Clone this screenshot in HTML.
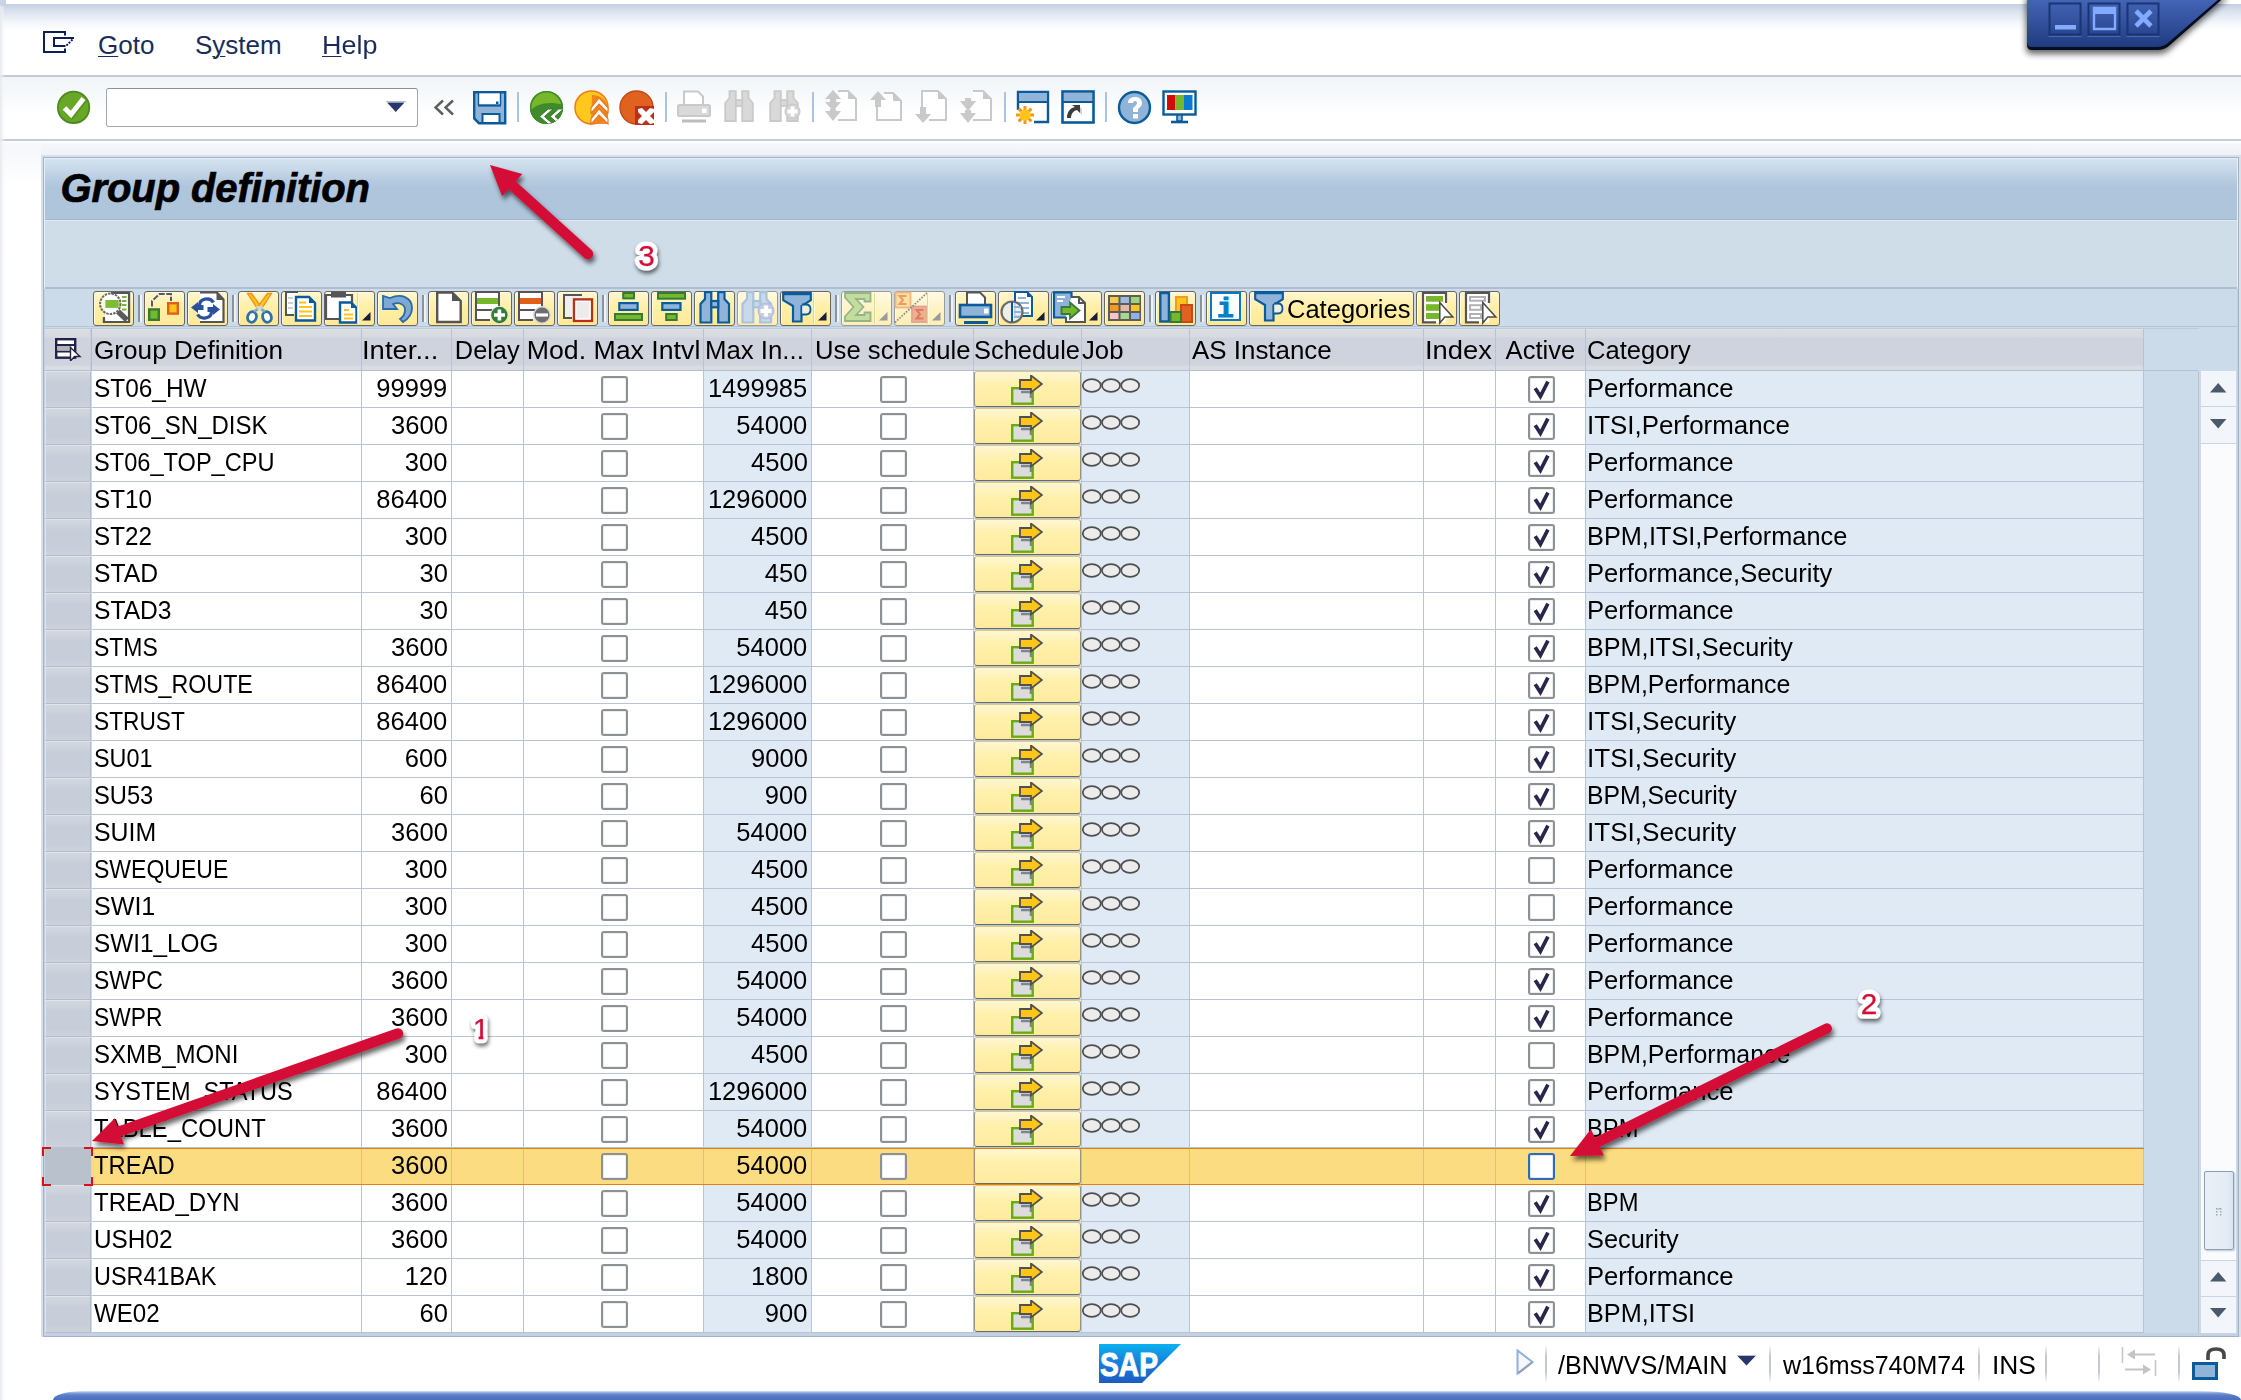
<!DOCTYPE html>
<html lang="en"><head><meta charset="utf-8"><title>Group definition</title>
<style>
html,body{margin:0;padding:0}
body{width:2241px;height:1400px;position:relative;overflow:hidden;background:#fff;font-family:"Liberation Sans", sans-serif;font-size:26px;color:#000}
.a{position:absolute}
.t{position:absolute;white-space:nowrap;line-height:37px;height:37px}
.r{text-align:right}
.sx{display:inline-block;transform-origin:0 50%}
.cell{position:absolute;height:36px}
.w{background:#fff}
.b{background:#dfeaf5}
.vl{position:absolute;width:1px;background:#b7c4d6}
.hl{position:absolute;height:1px;background:#b7c4d6}
.cb{position:absolute;width:23px;height:23px;border:2px solid #8e9193;border-radius:3px;background:#fff;box-shadow:inset 0 0 0 1px #ececec}
.selc{position:absolute;background:linear-gradient(#d2d7df,#c8ced9 30%,#c8ced9 80%,#cdd2dc);border:1px solid #dfe3ea;border-right-color:#b4bccb;border-bottom-color:#b4bccb;box-sizing:border-box}
.btn{position:absolute;box-sizing:border-box;border:1px solid #69665f;box-shadow:inset 1px 1px 0 #fffbe2;border-radius:3px;background:linear-gradient(#fff7cf,#ffefa8 45%,#ffe996)}
.sbtn{position:absolute;box-sizing:border-box;border:1px solid #9a937a;border-top-color:#d8c98c;border-bottom-color:#6e6a5e;border-radius:3px;background:linear-gradient(#fff7d2,#fff0ab 40%,#ffeb9f)}
.btn.dis{border-color:#9d9a8e;background:linear-gradient(#fffae4,#fff4c8 45%,#ffefb6)}
.tsep{position:absolute;width:2px;background:#8f9399;box-shadow:2px 0 0 #eef3f8}
.ssep{position:absolute;width:2px;top:1345px;height:38px;background:linear-gradient(rgba(200,204,212,0),#c4c8d0 30%,#c4c8d0 70%,rgba(200,204,212,0))}
.mu{text-decoration:underline;text-decoration-thickness:1.3px;text-underline-offset:1.5px}
</style></head><body>
<div class="a" style="left:0;top:4px;width:2241px;height:26px;background:linear-gradient(#c3cfe3,#dbe3ef 30%,#f3f6fa 70%,#fff)"></div>
<svg class="a" style="left:43px;top:31px" width="32" height="23" viewBox="0 0 32 23"><path d="M22 4.500V1H1v20h21v-3.500" fill="none" stroke="#0f1f55" stroke-width="2"/><path d="M31 7H11v8h11.500" fill="none" stroke="#0f1f55" stroke-width="2"/><path d="M29.500 8.500l-7 7" stroke="#0f1f55" stroke-width="2" stroke-dasharray="2 1.300"/></svg>
<div class="t" style="left:98px;top:27px;color:#1b2c5c"><span class="sx" style="transform:scaleX(1.0)"><span class="mu">G</span>oto</span></div>
<div class="t" style="left:195px;top:27px;color:#1b2c5c"><span class="sx" style="transform:scaleX(1.0)">S<span class="mu">y</span>stem</span></div>
<div class="t" style="left:322px;top:27px;color:#1b2c5c"><span class="sx" style="transform:scaleX(1.035)"><span class="mu">H</span>elp</span></div>
<div class="a" style="left:0;top:75px;width:2241px;height:2px;background:#c4cbd4"></div>
<div class="a" style="left:0;top:77px;width:2241px;height:62px;background:linear-gradient(#f1f5f9,#f8fafc 35%,#fff 60%)"></div>
<div class="a" style="left:0;top:139px;width:2241px;height:2px;background:#c6cdd8"></div>
<div class="a" style="left:0;top:141px;width:2241px;height:16px;background:linear-gradient(#fff,#f5f7fb 20%,#edf0f8)"></div>
<div class="a" style="left:0;top:141px;width:41px;height:45px;background:linear-gradient(#fff,#f5f7fb 8%,#f9fafc 45%,#fff)"></div>
<div class="a" style="left:106px;top:88px;width:312px;height:39px;box-sizing:border-box;border:1px solid #a4a8ae;border-top-color:#8c9096;border-radius:3px;background:#fff"></div>
<svg class="a" style="left:386px;top:101px" width="20" height="12" viewBox="0 0 20 12"><path d="M1 1.500h17.500l-8.750 9.500z" fill="#27376b"/><path d="M0 0.5h20" stroke="#b9bfd0" stroke-width="1"/></svg>
<svg class="a" style="left:56px;top:90px" width="36" height="36" viewBox="0 0 36 36"><circle cx="17.600" cy="17.400" r="15.700" fill="#69a827" stroke="#4a8a1e" stroke-width="1.800"/><path d="M8.500 18.500l6.500 6.500L28 8.500" fill="none" stroke="#3f6f1c" stroke-opacity="0.35" stroke-width="5.500" transform="translate(0.800,1.200)"/><path d="M8.500 18l6.500 6.500L27.500 8.500" fill="none" stroke="#fff" stroke-width="5"/></svg>
<svg class="a" style="left:433px;top:99px" width="22" height="17" viewBox="0 0 22 17"><path d="M10 1.5L2.5 8.5 10 15.5M20 1.5L12.5 8.5 20 15.5" fill="none" stroke="#5d5d5d" stroke-width="2.4"/></svg>
<svg class="a" style="left:473px;top:91px" width="34" height="34" viewBox="0 0 34 34"><path d="M1.200 1.200h31v31H6l-4.800-4.800z" fill="#8fb3d9" stroke="#0b5a99" stroke-width="2.4"/><rect x="6" y="2.400" width="21" height="11" fill="#fff"/><path d="M5 14.500h23" stroke="#0b5a99" stroke-width="2.200"/><path d="M5.500 2v12M27.500 2v12" stroke="#0b5a99" stroke-width="1.400"/><rect x="9.500" y="23" width="17" height="9" fill="#fff" stroke="#0b5a99" stroke-width="2"/><rect x="23" y="10.500" width="2.500" height="2.500" fill="#0b5a99"/></svg>
<div class="a" style="left:517px;top:92px;width:2px;height:30px;background:#aac4e2"></div>
<svg class="a" style="left:529px;top:90px" width="36" height="36" viewBox="0 0 36 36"><defs><clipPath id="cg"><circle cx="17.500" cy="17.500" r="16.500"/></clipPath></defs><circle cx="17.500" cy="17.500" r="16.500" fill="#76b82a"/><path d="M-2 26C4 13 20 10 38 16V38H-2z" fill="#3f8a2a" clip-path="url(#cg)"/><circle cx="17.500" cy="17.500" r="15.800" fill="none" stroke="#3f8a2a" stroke-width="1.600"/><g clip-path="url(#cg)"><path d="M10.500 26.500l8.500-7.500h5l-8.500 7.500 8.500 7.500h-5zM21 26.500l8.500-7.500h5l-8.500 7.500 8.500 7.500h-5z" fill="#fff" stroke="#2f7a22" stroke-width="1"/></g></svg>
<svg class="a" style="left:574px;top:90px" width="36" height="36" viewBox="0 0 36 36"><circle cx="17.5" cy="17.5" r="16.5" fill="#ffc81e" stroke="#ef7f1a" stroke-width="1.6"/><path d="M18 5c8 0 15 5 16 14v15H17z" fill="#ee7d1c" opacity="0.9"/><path d="M25 8l9 10v5l-9-9-8 9v-5zM25 19l9 10v5l-9-9-8 9v-5z" fill="#fff" stroke="#e8731a" stroke-width="1.1"/></svg>
<svg class="a" style="left:619px;top:90px" width="36" height="36" viewBox="0 0 36 36"><circle cx="17.5" cy="17.5" r="16.5" fill="#e0621e" stroke="#c04a17" stroke-width="1.4"/><path d="M16 16h19v19H16z" fill="#b9311a"/><path d="M19 19l4-1 4 4 4-4 4 1v3l-4 4 4 4v3l-4 1-4-4-4 4-4-1v-3l4-4-4-4z" fill="#fff"/></svg>
<div class="a" style="left:665px;top:92px;width:2px;height:30px;background:#aac4e2"></div>
<svg class="a" style="left:677px;top:90px" width="34" height="34" viewBox="0 0 34 34"><path d="M7 14V1.5h14l5 5V14" fill="#fff" stroke="#c9c9c9" stroke-width="2"/><rect x="1" y="15" width="32" height="11" rx="1.5" fill="#d9d9d9" stroke="#c9c9c9" stroke-width="2"/><rect x="25" y="18.5" width="4.5" height="4.5" fill="#fff"/><path d="M5 31h24" stroke="#bdbdbd" stroke-width="3"/></svg>
<svg class="a" style="left:724px;top:90px" width="32" height="34" viewBox="0 0 32 34"><path d="M5.500 1.200h6.300V31H1.200V13l4.300-5zM18.200 1.200h6.300V8l4.300 5V31H18.200z" fill="#d9d9d9" stroke="#c9c9c9" stroke-width="1.800"/><rect x="11.800" y="10" width="6.400" height="6" fill="#d9d9d9" stroke="#c9c9c9" stroke-width="1.800"/></svg>
<svg class="a" style="left:769px;top:90px" width="32" height="34" viewBox="0 0 32 34"><path d="M5.500 1.200h6.300V31H1.200V13l4.300-5zM18.200 1.200h6.300V8l4.300 5V31H18.200z" fill="#d9d9d9" stroke="#c9c9c9" stroke-width="1.800"/><rect x="11.800" y="10" width="6.400" height="6" fill="#d9d9d9" stroke="#c9c9c9" stroke-width="1.800"/><circle cx="23.500" cy="21.500" r="7.500" fill="#d4d4d4" stroke="#c6c6c6"/><path d="M23.500 16.500v10M18.500 21.500h10" stroke="#fff" stroke-width="3.800"/></svg>
<div class="a" style="left:812px;top:92px;width:2px;height:30px;background:#aac4e2"></div>
<svg class="a" style="left:824px;top:90px" width="34" height="34" viewBox="0 0 34 34"><path d="M14 1h10l8 8v21H14" fill="#fff" stroke="#c9c9c9" stroke-width="2"/><path d="M24 1v8h8z" fill="#c9c9c9"/><path d="M9 0l8 9h-5v3h5l-8 9-8-9h5v-3h-5z" fill="#c9c9c9" transform="translate(0,0)"/><path d="M9 33l8-9h-5v-3h5" fill="none"/><path d="M1 21l8 10 8-10h-5v-2h-6v2z" fill="#c9c9c9"/></svg>
<svg class="a" style="left:869px;top:90px" width="34" height="34" viewBox="0 0 34 34"><path d="M15 3h9l8 8v19H8V17" fill="#fff" stroke="#c9c9c9" stroke-width="2"/><path d="M24 3v8h8z" fill="#c9c9c9"/><path d="M9 1l8 9h-5v7h-6v-7h-5z" fill="#c9c9c9"/></svg>
<svg class="a" style="left:914px;top:90px" width="34" height="34" viewBox="0 0 34 34"><path d="M8 17V1h16l8 8v21H15" fill="#fff" stroke="#c9c9c9" stroke-width="2"/><path d="M24 1v8h8z" fill="#c9c9c9"/><path d="M9 33l8-9h-5v-7h-6v7h-5z" fill="#c9c9c9"/></svg>
<svg class="a" style="left:959px;top:90px" width="34" height="34" viewBox="0 0 34 34"><path d="M14 1h10l8 8v21H14" fill="#fff" stroke="#c9c9c9" stroke-width="2"/><path d="M24 1v8h8z" fill="#c9c9c9"/><path d="M1 11l8 10 8-10h-5V8h-6v3zM1 23l8 10 8-10h-5v-3h-6v3z" fill="#c9c9c9"/><path d="M1 10l8-9 8 9z" fill="#c9c9c9" opacity="0"/></svg>
<div class="a" style="left:1004px;top:92px;width:2px;height:30px;background:#aac4e2"></div>
<svg class="a" style="left:1016px;top:90px" width="34" height="34" viewBox="0 0 34 34"><path d="M2 20V2h30v30H18" fill="#fff" stroke="#0b5a99" stroke-width="2.4"/><rect x="3" y="3" width="28" height="8" fill="#8fb3d9"/><path d="M2 12h30" stroke="#0b5a99" stroke-width="2"/><g transform="translate(9,25)"><path d="M0-9v18M-9 0h18M-6.4-6.4l12.8 12.8M6.4-6.4l-12.8 12.8" stroke="#f6961e" stroke-width="3"/><circle r="5.6" fill="#ffc41a"/></g></svg>
<svg class="a" style="left:1061px;top:90px" width="34" height="34" viewBox="0 0 34 34"><rect x="1.5" y="1.5" width="31" height="31" fill="#fff" stroke="#0b5a99" stroke-width="2.6"/><rect x="3" y="3" width="28" height="8" fill="#8fb3d9"/><path d="M2 12h30" stroke="#0b5a99" stroke-width="2"/><path d="M11 15h8v8l-3-3c-4 1-6 4-6 8H6c0-6 3-10 8-11z" fill="#3c3c3c"/><path d="M19 17l2 2v6l-2-2z" fill="#cfcfcf"/></svg>
<div class="a" style="left:1105px;top:92px;width:2px;height:30px;background:#aac4e2"></div>
<svg class="a" style="left:1117px;top:90px" width="36" height="36" viewBox="0 0 36 36"><circle cx="17.5" cy="17.5" r="15.5" fill="#8fb3d9" stroke="#0b5a99" stroke-width="2.4"/><path d="M11 13c0-4 3-6 7-6s7 2 7 6c0 3-2 4-4 6v3h-5v-4c2-2 4-3 4-5 0-1-1-2-2-2s-2 1-2 2z" fill="#fff"/><rect x="16" y="24" width="5" height="4.5" fill="#fff"/></svg>
<svg class="a" style="left:1162px;top:90px" width="36" height="36" viewBox="0 0 36 36"><rect x="1.5" y="1.5" width="32" height="23" fill="#fff" stroke="#0b5a99" stroke-width="2.4"/><rect x="5" y="5" width="8.5" height="15" fill="#d10a0a"/><rect x="13.5" y="5" width="8.5" height="15" fill="#76b82a"/><rect x="22" y="5" width="8.5" height="15" fill="#0a7bd1"/><path d="M15 25h5v6h-5z" fill="#8fb3d9" stroke="#0b5a99" stroke-width="1.6"/><path d="M9 32h17" stroke="#0b5a99" stroke-width="2.6"/></svg>
<svg class="a" style="left:1990px;top:0px" width="251" height="70" viewBox="0 0 251 70"><defs><linearGradient id="wg" x1="0" y1="0" x2="0" y2="1"><stop offset="0" stop-color="#4669ba"/><stop offset="0.5" stop-color="#34529f"/><stop offset="1" stop-color="#1f3b80"/></linearGradient><filter id="wf" x="-10%" y="-20%" width="120%" height="160%"><feGaussianBlur stdDeviation="3"/></filter></defs><path d="M36 -5V45q0 6 6 6H168q8 0 13-6L238 -5z" fill="#000" opacity="0.6" filter="url(#wf)" transform="translate(0,3)"/><path d="M37 -5V45q0 5 5 5H167q8 0 13-5L237 -5z" fill="#070d20"/><path d="M37 -5V42q0 5 5 5H166q8 0 13-5L233.500 -5z" fill="url(#wg)"/><rect x="59.5" y="3.5" width="31" height="31" fill="none" stroke="#1b3473" stroke-width="2"/><path d="M58.5 36.5h33" stroke="#4a69b4" stroke-width="1"/><rect x="98.5" y="3.5" width="31" height="31" fill="none" stroke="#1b3473" stroke-width="2"/><path d="M97.5 36.5h33" stroke="#4a69b4" stroke-width="1"/><rect x="137.5" y="3.5" width="31" height="31" fill="none" stroke="#1b3473" stroke-width="2"/><path d="M136.5 36.5h33" stroke="#4a69b4" stroke-width="1"/><rect x="65" y="25" width="21" height="4.5" fill="#82aaff"/><path d="M104 8h21v21h-21z" fill="none" stroke="#82aaff" stroke-width="2.4"/><rect x="104" y="8" width="21" height="6" fill="#82aaff"/><path d="M146 11l15 15M161 11l-15 15" stroke="#82aaff" stroke-width="4.6"/></svg>
<div class="a" style="left:41px;top:155px;width:2200px;height:1183px;background:#dadfe8"></div>
<div class="a" style="left:43px;top:157px;width:2196px;height:1180px;background:#a0b2c9"></div>
<div class="a" style="left:44px;top:158px;width:2194px;height:1178px;background:#e6eef6"></div>
<div class="a" style="left:44px;top:289px;width:2194px;height:1047px;background:#c3d1e1"></div>
<div class="a" style="left:45px;top:159px;width:2192px;height:60px;background:linear-gradient(#d4e2ef,#c8d9e9 16%,#b6cbe0 36%,#afc5dc 48%,#afc5dc)"></div>
<div class="a" style="left:45px;top:219px;width:2192px;height:1px;background:#a3b7ce"></div>
<div class="a" style="left:45px;top:220px;width:2192px;height:1px;background:#dde8f2"></div>
<div class="a" style="left:60.5px;top:164px;white-space:nowrap;font-weight:bold;font-style:italic;font-size:40px;line-height:48px;letter-spacing:-0.1px;-webkit-text-stroke:0.7px #000">Group definition</div>
<div class="a" style="left:45px;top:221px;width:2192px;height:66px;background:#cfdde9"></div>
<div class="a" style="left:45px;top:287px;width:2192px;height:2px;background:#aebdcf"></div>
<div class="a" style="left:45px;top:289px;width:2192px;height:1044px;background:#cbdbea"></div>
<div class="a" style="left:45px;top:326px;width:2192px;height:1px;background:#b4c4d7"></div>
<div class="a" style="left:45px;top:328px;width:2154px;height:1px;background:#bccadb"></div>
<div class="btn" style="left:93px;top:291px;width:41px;height:35px"></div>
<svg class="a" style="left:97px;top:291px" width="36" height="34" viewBox="0 0 36 34"><path d="M7 26.500v4.500h25V2H18" fill="#fff" stroke="#555" stroke-width="2.200"/><rect x="8" y="3" width="23" height="27" fill="#fff"/><path d="M7 26v5h25V2H14" fill="none" stroke="#555" stroke-width="2.200"/><rect x="8.500" y="9" width="15" height="7.800" fill="#76b82a"/><path d="M25 6h4.500M25 10h4.500M25 14h4.500M25 18.500h4.500" stroke="#76b82a" stroke-width="2.200"/><circle cx="13.300" cy="12.800" r="10.200" fill="#fff" fill-opacity="0.550" stroke="#6a6a6a" stroke-width="2" stroke-dasharray="2.500 1"/><rect x="8.500" y="9" width="13" height="7.800" fill="#76b82a" opacity="0.9"/><path d="M21 20.500l9 8.500" stroke="#5a5a5a" stroke-width="5.500" stroke-linecap="butt"/></svg>
<div class="tsep" style="left:138px;top:295px;height:27px"></div>
<div class="btn" style="left:144px;top:291px;width:41px;height:35px"></div>
<svg class="a" style="left:146px;top:291px" width="36" height="34" viewBox="0 0 36 34"><rect x="3.200" y="18.400" width="9.600" height="10.400" fill="#76b82a" stroke="#357a3a" stroke-width="2.400"/><rect x="22.200" y="12.200" width="9.600" height="10.400" fill="#ffc41a" stroke="#e0601a" stroke-width="2.400"/><path d="M6 15.500V10L13.500 3H26V10" fill="none" stroke="#f4f4f4" stroke-width="2" transform="translate(-1.500,0.500)"/><path d="M6 15.500V10L13.500 3H25V10" fill="none" stroke="#5a5a5a" stroke-width="2" stroke-dasharray="6 1.500"/></svg>
<div class="btn" style="left:187px;top:291px;width:41px;height:35px"></div>
<svg class="a" style="left:190px;top:291px" width="36" height="34" viewBox="0 0 36 34"><path d="M10 1.500h17l6.500 7V31H10" fill="#fff" stroke="#555" stroke-width="2.200"/><path d="M26.500 1.500v7.500h7z" fill="#555"/><ellipse cx="15.500" cy="17.500" rx="9" ry="9.500" fill="#fff"/><path d="M9.500 14.500C9.500 7 20 6 23.500 11.500" fill="none" stroke="#2a50a0" stroke-width="3.200"/><path d="M21.500 20.500C21.500 28 11 29 7.500 23.500" fill="none" stroke="#2a50a0" stroke-width="3.200"/><path d="M1 16.500L8 11v3h5.500v5H8v3z" fill="#2a50a0"/><path d="M30 18.500L23 13v3h-5.500v5H23v3z" fill="#2a50a0"/></svg>
<div class="tsep" style="left:232px;top:295px;height:27px"></div>
<div class="btn" style="left:238px;top:291px;width:41px;height:35px"></div>
<svg class="a" style="left:243px;top:291px" width="34" height="34" viewBox="0 0 34 34"><path d="M4.500 2.500L8.500 2.500L18.500 16L15 18.500Z" fill="#ffc41a" stroke="#f28f1c" stroke-width="1.300"/><path d="M28.500 2.500L24.500 2.500L14.500 16L18 18.500Z" fill="#ffc41a" stroke="#f28f1c" stroke-width="1.300"/><rect x="13.300" y="15" width="6.400" height="4.500" fill="#cdd5dc"/><ellipse cx="9" cy="26" rx="4.300" ry="5.300" fill="#fff" stroke="#2f70aa" stroke-width="2.800" transform="rotate(18 9 26)"/><ellipse cx="24" cy="26" rx="4.300" ry="5.300" fill="#fff" stroke="#2f70aa" stroke-width="2.800" transform="rotate(-18 24 26)"/><path d="M11 20.500l3.500-2M22 20.500l-3.500-2" stroke="#7fa6c8" stroke-width="2.600"/></svg>
<div class="btn" style="left:281px;top:291px;width:41px;height:35px"></div>
<svg class="a" style="left:284px;top:289.5px" width="34" height="34" viewBox="0 0 34 34"><path d="M14 2H2v23h8" fill="#fff" stroke="#555" stroke-width="2"/><path d="M4 8h5M4 13h5M4 18h5" stroke="#cfcfcf" stroke-width="2"/><path d="M12 7h13l6 6v17.500H12z" fill="#fff" stroke="#0b5a99" stroke-width="2.4"/><path d="M25 7v6h6z" fill="#0b5a99"/><path d="M15 12.500h7M15 17h13M15 21.500h13M15 26h13" stroke="#ffc41a" stroke-width="2.2"/></svg>
<div class="btn" style="left:324px;top:291px;width:51px;height:35px"></div>
<svg class="a" style="left:324px;top:291px" width="34" height="35" viewBox="0 0 34 35"><path d="M2 4h26v24H2z" fill="#fff" stroke="#555" stroke-width="2.200"/><rect x="7" y="0.500" width="15" height="6" fill="#555"/><path d="M16 11.500h11l5.500 5.500v14.500H16z" fill="#fff" stroke="#0b5a99" stroke-width="2.400"/><path d="M27 11.500v5.500h5.500z" fill="#0b5a99"/><path d="M20 19h5M20 23.500h9M20 27.500h9" stroke="#ffc41a" stroke-width="2.200"/></svg>
<div class="a" style="left:357px;top:293px;width:1px;height:31px;background:#e6d595;box-shadow:1px 0 0 #fffbe0"></div>
<svg class="a" style="left:362px;top:312px" width="8.5" height="8.5" viewBox="0 0 8.5 8.5"><path d="M8.500 0v8.500H0z" fill="#1c1c3a"/></svg>
<div class="btn" style="left:377px;top:291px;width:41px;height:35px"></div>
<svg class="a" style="left:380px;top:292px" width="36" height="34" viewBox="0 0 36 34"><path d="M3 4v13h14l-4-5c6-2 12 0 12 6 0 4-2 7-5 9l3 3c5-3 9-8 9-14C32 6 22 1 10 6z" fill="#7ea9d3" stroke="#2a6aa8" stroke-width="1.8"/></svg>
<div class="tsep" style="left:422px;top:295px;height:27px"></div>
<div class="btn" style="left:428px;top:291px;width:41px;height:35px"></div>
<svg class="a" style="left:435px;top:291px" width="28" height="34" viewBox="0 0 28 34"><path d="M2.200 1.500h15l8.500 8.500v21H2.200z" fill="#fff" stroke="#555" stroke-width="2.400"/><path d="M17 1.500v8.500h8.500z" fill="#555"/></svg>
<div class="btn" style="left:471px;top:291px;width:41px;height:35px"></div>
<svg class="a" style="left:474px;top:290px" width="36" height="36" viewBox="0 0 36 36"><path d="M25 2H2v28h14" fill="none" stroke="#555" stroke-width="2"/><rect x="3" y="3" width="22" height="17" fill="#fff"/><rect x="3" y="8" width="22" height="6" fill="#76b82a"/><rect x="3" y="20" width="14" height="9" fill="#fff"/><path d="M2 20h16M25 2v14" stroke="#555" stroke-width="2"/><circle cx="25.400" cy="25" r="9.300" fill="#dcebd2" fill-opacity="0.8"/><circle cx="25.400" cy="25" r="8.200" fill="#357a3a"/><path d="M25.400 19.500v11M20 25h11" stroke="#fff" stroke-width="3.600"/></svg>
<div class="btn" style="left:514px;top:291px;width:41px;height:35px"></div>
<svg class="a" style="left:517px;top:290px" width="36" height="36" viewBox="0 0 36 36"><path d="M25 2H2v28h14" fill="none" stroke="#555" stroke-width="2"/><rect x="3" y="3" width="22" height="17" fill="#fff"/><rect x="3" y="8" width="22" height="6" fill="#e0601a"/><rect x="3" y="20" width="14" height="9" fill="#fff"/><path d="M2 20h16M25 2v14" stroke="#555" stroke-width="2"/><circle cx="25" cy="25" r="8.2" fill="#6e6e6e" stroke="#d6d6d6" stroke-width="1.4"/><path d="M19 25h12" stroke="#fff" stroke-width="3.2"/></svg>
<div class="btn" style="left:557px;top:291px;width:41px;height:35px"></div>
<svg class="a" style="left:562px;top:293px" width="32" height="32" viewBox="0 0 32 32"><path d="M20 2H2v23h8" fill="#efefef" stroke="#555" stroke-width="2"/><rect x="12" y="6.400" width="18" height="21.500" fill="#ececec" stroke="#b9311a" stroke-width="2.400"/><rect x="14" y="8.400" width="14" height="17.500" fill="none" stroke="#fff" stroke-width="1.200"/></svg>
<div class="tsep" style="left:602px;top:295px;height:27px"></div>
<div class="btn" style="left:608px;top:291px;width:41px;height:35px"></div>
<svg class="a" style="left:613px;top:291px" width="32" height="34" viewBox="0 0 32 34"><rect x="10.200" y="2" width="10.800" height="5.400" fill="#76b82a" stroke="#357a3a" stroke-width="2"/><rect x="6.300" y="12.100" width="18.300" height="6.800" fill="#8fb3d9" stroke="#0b5a99" stroke-width="2.200"/><rect x="2" y="23" width="27" height="6" fill="#76b82a" stroke="#357a3a" stroke-width="2"/></svg>
<div class="btn" style="left:651px;top:291px;width:41px;height:35px"></div>
<svg class="a" style="left:656px;top:291px" width="32" height="34" viewBox="0 0 32 34"><rect x="2" y="2" width="27" height="5.700" fill="#76b82a" stroke="#357a3a" stroke-width="2"/><rect x="6.300" y="12.100" width="18.200" height="6.800" fill="#8fb3d9" stroke="#0b5a99" stroke-width="2.200"/><rect x="10.200" y="23" width="10.500" height="6" fill="#76b82a" stroke="#357a3a" stroke-width="2"/></svg>
<div class="btn" style="left:694px;top:291px;width:41px;height:35px"></div>
<svg class="a" style="left:699px;top:291px" width="32" height="34" viewBox="0 0 32 34"><path d="M6 1.200h6.300V31.500H1.500V13L6 8zM19.200 1.200h6.300V8L30 13V31.500H19.200z" fill="#8fb3d9" stroke="#0b5a99" stroke-width="2.200"/><rect x="12.300" y="10" width="6.900" height="6.300" fill="#8fb3d9" stroke="#0b5a99" stroke-width="2.200"/></svg>
<div class="btn dis" style="left:737px;top:291px;width:41px;height:35px"></div>
<svg class="a" style="left:741px;top:291px" width="32" height="34" viewBox="0 0 32 34"><path d="M6 1.200h6.300V31.500H1.500V13L6 8zM19.200 1.200h6.300V8L30 13V31.500H19.200z" fill="#c9d9ea" stroke="#a9c3dc" stroke-width="2.200"/><rect x="12.300" y="10" width="6.900" height="6.300" fill="#c9d9ea" stroke="#a9c3dc" stroke-width="2.200"/></svg>
<svg class="a" style="left:757px;top:301.5px" width="18" height="18" viewBox="0 0 18 18"><circle cx="9" cy="9" r="7.800" fill="#c4cce6" stroke="#b4bee0" stroke-width="1.400"/><path d="M9 3.500v11M3.500 9h11" stroke="#fff" stroke-width="4.200"/></svg>
<div class="btn" style="left:780px;top:291px;width:51px;height:35px"></div>
<svg class="a" style="left:782px;top:292px" width="32" height="31" viewBox="0 0 32 31"><path d="M1.2 1.2h27.600v7L19.500 14v15.500h-8.500V14L1.200 8.200z" fill="#8fb3d9" stroke="#0b5a99" stroke-width="2.2"/><path d="M1.500 2h27" stroke="#0b5a99" stroke-width="2.4"/><path d="M20 12.500h4c3.500 0 4.500 2 4.500 5s-1 5-4.500 5h-4" fill="#e8eef6" fill-opacity="0.7" stroke="#0b5a99" stroke-width="1.8"/></svg>
<div class="a" style="left:813px;top:293px;width:1px;height:31px;background:#e6d595;box-shadow:1px 0 0 #fffbe0"></div>
<svg class="a" style="left:818px;top:312px" width="8.5" height="8.5" viewBox="0 0 8.5 8.5"><path d="M8.500 0v8.500H0z" fill="#1c1c3a"/></svg>
<div class="tsep" style="left:835px;top:295px;height:27px"></div>
<div class="btn dis" style="left:841px;top:291px;width:51px;height:35px"></div>
<svg class="a" style="left:844px;top:291.5px" width="28" height="30" viewBox="0 0 28 30"><path d="M1 1h25.500v8.500h-6V7H12l7.500 8-7.500 8h8.500v-2.500h6V29H1v-4.500l8.500-9.500L1 5.500z" fill="#c4dd9e" stroke="#93b58c" stroke-width="1.800"/></svg>
<div class="a" style="left:874px;top:293px;width:1px;height:31px;background:#e6d595;box-shadow:1px 0 0 #fffbe0"></div>
<svg class="a" style="left:879px;top:312px" width="8.5" height="8.5" viewBox="0 0 8.5 8.5"><path d="M8.500 0v8.500H0z" fill="#9a9a9e"/></svg>
<div class="btn dis" style="left:894px;top:291px;width:51px;height:35px"></div>
<svg class="a" style="left:894px;top:291px" width="36" height="34" viewBox="0 0 36 34"><rect x="1.500" y="1.500" width="15" height="15" fill="#f9e29a" stroke="#f1b48c" stroke-width="1.800"/><path d="M12.500 5H5.500l3.500 4-3.500 4h7" fill="none" stroke="#ee9a70" stroke-width="2"/><rect x="18" y="15.500" width="15.500" height="15.500" fill="#eeb08e" stroke="#e3a29a" stroke-width="1.800"/><path d="M29.500 19h-7l3.500 4.200-3.500 4.200h7" fill="none" stroke="#e07a5c" stroke-width="2"/><path d="M1 31.500L34 1" stroke="#8a8a8a" stroke-width="1.800" stroke-dasharray="1.600 1.400"/></svg>
<div class="a" style="left:927px;top:293px;width:1px;height:31px;background:#e6d595;box-shadow:1px 0 0 #fffbe0"></div>
<svg class="a" style="left:932px;top:312px" width="8.5" height="8.5" viewBox="0 0 8.5 8.5"><path d="M8.500 0v8.500H0z" fill="#9a9a9e"/></svg>
<div class="tsep" style="left:949px;top:295px;height:27px"></div>
<div class="btn" style="left:955px;top:291px;width:41px;height:35px"></div>
<svg class="a" style="left:958px;top:291px" width="36" height="35" viewBox="0 0 36 35"><path d="M9 13V1.500h13l5 5V13" fill="#fff" stroke="#555" stroke-width="2"/><rect x="2" y="14" width="31" height="12" fill="#8fb3d9" stroke="#0b5a99" stroke-width="2.6"/><rect x="26" y="17.500" width="4.500" height="5" fill="#fff"/><path d="M6 31.500h24" stroke="#0b5a99" stroke-width="3"/></svg>
<div class="btn" style="left:998px;top:291px;width:51px;height:35px"></div>
<svg class="a" style="left:1000px;top:291px" width="36" height="35" viewBox="0 0 36 35"><path d="M15 1h12l5 5v19H15z" fill="#fff" stroke="#0b5a99" stroke-width="2"/><path d="M27 1v5h5z" fill="#0b5a99"/><path d="M18 7h8M18 12h11M18 17h11M18 22h11" stroke="#8fb3d9" stroke-width="2"/><circle cx="12" cy="21" r="10.500" fill="#e9eef5" fill-opacity="0.85" stroke="#6b6b6b" stroke-width="2.2"/><path d="M12 11v20" stroke="#0b5a99" stroke-width="2"/><path d="M14 16h7M14 21h7M14 26h6" stroke="#8fb3d9" stroke-width="2"/></svg>
<svg class="a" style="left:1036px;top:312px" width="8.5" height="8.5" viewBox="0 0 8.5 8.5"><path d="M8.500 0v8.500H0z" fill="#1c1c3a"/></svg>
<div class="btn" style="left:1051px;top:291px;width:51px;height:35px"></div>
<svg class="a" style="left:1052px;top:291px" width="36" height="35" viewBox="0 0 36 35"><path d="M2 1.500h17.500v25H2z" fill="#8fb3d9" stroke="#0b5a99" stroke-width="2.200"/><path d="M5 6h8M5 10h6" stroke="#fff" stroke-width="2"/><path d="M19 6h8l6 6v19H14v-5" fill="#fff" stroke="#555" stroke-width="2"/><path d="M27 6v6h6" fill="none" stroke="#555" stroke-width="2"/><path d="M9.500 16h8.500v-4.500l9.500 8-9.500 8v-4.500H9.500z" fill="#76b82a" stroke="#357a3a" stroke-width="1.800"/></svg>
<svg class="a" style="left:1089px;top:312px" width="8.5" height="8.5" viewBox="0 0 8.5 8.5"><path d="M8.500 0v8.500H0z" fill="#1c1c3a"/></svg>
<div class="btn" style="left:1104px;top:291px;width:41px;height:35px"></div>
<svg class="a" style="left:1108px;top:294.5px" width="33" height="26" viewBox="0 0 33 26"><rect x="0" y="0" width="33" height="26" fill="#5c5c5c"/><rect x="2.0" y="2" width="8.500" height="6" fill="#ffc84a"/><rect x="12.5" y="2" width="8.500" height="6" fill="#9dbbe0"/><rect x="23.0" y="2" width="8.500" height="6" fill="#9fd27e"/><rect x="2.0" y="10" width="8.500" height="6" fill="#f59a1e"/><rect x="12.5" y="10" width="8.500" height="6" fill="#e3b8a8"/><rect x="23.0" y="10" width="8.500" height="6" fill="#ffc41a"/><rect x="2.0" y="18" width="8.500" height="6" fill="#f7c4c8"/><rect x="12.5" y="18" width="8.500" height="6" fill="#a8d890"/><rect x="23.0" y="18" width="8.500" height="6" fill="#8fb3e0"/></svg>
<div class="tsep" style="left:1149px;top:295px;height:27px"></div>
<div class="btn" style="left:1155px;top:291px;width:41px;height:35px"></div>
<svg class="a" style="left:1158px;top:291px" width="36" height="34" viewBox="0 0 36 34"><rect x="2.300" y="2" width="8.600" height="28.500" fill="#8fb3d9" stroke="#0b5a99" stroke-width="2.400"/><rect x="18" y="6" width="11" height="25" fill="#ffc41a" stroke="#f59a1e" stroke-width="2"/><rect x="23" y="14" width="11" height="17" fill="#e0621e" stroke="#c64a17" stroke-width="2"/><rect x="12.500" y="21" width="10.500" height="10" fill="#76b82a" stroke="#357a3a" stroke-width="2"/></svg>
<div class="tsep" style="left:1200px;top:295px;height:27px"></div>
<div class="btn" style="left:1206px;top:291px;width:41px;height:35px"></div>
<div class="a" style="left:1210px;top:292px;width:27px;height:25px;background:#fff;border:2px solid #0a78c8"></div>
<div class="a" style="left:1210px;top:295px;width:31px;height:29px;font-family:'Liberation Mono',monospace;font-weight:bold;font-size:28px;line-height:29px;text-align:center;color:#0080c6;-webkit-text-stroke:1px #0080c6">i</div>
<div class="btn" style="left:1249px;top:291px;width:165px;height:35px"></div>
<svg class="a" style="left:1254px;top:291px" width="32" height="31" viewBox="0 0 32 31"><path d="M1.2 1.2h27.600v7L19.500 14v15.500h-8.500V14L1.200 8.200z" fill="#8fb3d9" stroke="#0b5a99" stroke-width="2.2"/><path d="M1.500 2h27" stroke="#0b5a99" stroke-width="2.4"/><path d="M20 12.500h4c3.500 0 4.500 2 4.500 5s-1 5-4.500 5h-4" fill="#e8eef6" fill-opacity="0.7" stroke="#0b5a99" stroke-width="1.8"/></svg>
<div class="t" style="left:1287px;top:291px"><span class="sx" style="transform:scaleX(0.9816)">Categories</span></div>
<div class="btn" style="left:1416px;top:291px;width:41px;height:35px"></div>
<svg class="a" style="left:1419.5px;top:291px" width="36" height="34" viewBox="0 0 36 34"><rect x="3" y="1.500" width="23" height="30" fill="#fff"/><path d="M26 12V1.800H3v29.500h13" fill="none" stroke="#555" stroke-width="2.200"/><rect x="6" y="5" width="17" height="5.700" fill="#76b82a"/><rect x="6" y="13.200" width="13" height="6.600" fill="#76b82a"/><rect x="6" y="22" width="13" height="6" fill="#76b82a"/><path d="M19.800 11.500V32l5-6h8z" fill="#fff" stroke="#4a4a4a" stroke-width="1.500" stroke-linejoin="miter"/></svg>
<div class="btn" style="left:1459px;top:291px;width:41px;height:35px"></div>
<svg class="a" style="left:1462.5px;top:291px" width="36" height="34" viewBox="0 0 36 34"><rect x="3" y="1.500" width="23" height="30" fill="#fff"/><path d="M26 12V1.800H3v29.500h13" fill="none" stroke="#555" stroke-width="2.200"/><rect x="7" y="6" width="15" height="3.700" fill="#fff" stroke="#b2b2b2" stroke-width="2"/><rect x="7" y="14.200" width="11" height="4.600" fill="#fff" stroke="#b2b2b2" stroke-width="2"/><rect x="7" y="23" width="11" height="4" fill="#fff" stroke="#b2b2b2" stroke-width="2"/><path d="M19.800 11.500V32l5-6h8z" fill="#fff" stroke="#4a4a4a" stroke-width="1.500" stroke-linejoin="miter"/></svg>
<div class="a" style="left:45px;top:329px;width:45px;height:41px;background:linear-gradient(#e2e5ea,#d9dde2 4%,#d7dbe1 19%,#cfd3dd 22%,#cfd3dd 88%,#d9dde1 91%,#d9dde1)"></div>
<svg class="a" style="left:54px;top:337px" width="28" height="24" viewBox="0 0 28 24"><rect x="2.2" y="2.2" width="19" height="18.5" fill="#fff" stroke="#23234a" stroke-width="2.4"/><rect x="3.4" y="9" width="14" height="4.6" fill="#b4b4b4"/><path d="M2 8h19M2 14.6h15" stroke="#23234a" stroke-width="1.8"/><path d="M16.5 10.500l9.500 9h-5.500l-4 4.500z" fill="#fff" stroke="#23234a" stroke-width="1.4"/></svg>
<div class="a" style="left:92px;top:329px;width:269px;height:41px;background:linear-gradient(#e2e5ea,#d9dde2 4%,#d7dbe1 19%,#cfd3dd 22%,#cfd3dd 88%,#d9dde1 91%,#d9dde1)"></div>
<div class="a" style="left:361px;top:329px;width:1px;height:41px;background:#b9c2d0"></div>
<div class="t" style="left:94px;top:332px"><span class="sx" style="transform:scaleX(1.0061)">Group Definition</span></div>
<div class="a" style="left:362px;top:329px;width:89px;height:41px;background:linear-gradient(#e2e5ea,#d9dde2 4%,#d7dbe1 19%,#cfd3dd 22%,#cfd3dd 88%,#d9dde1 91%,#d9dde1)"></div>
<div class="a" style="left:451px;top:329px;width:1px;height:41px;background:#b9c2d0"></div>
<div class="t" style="left:362px;top:332px"><span class="sx" style="transform:scaleX(1.0553)">Inter...</span></div>
<div class="a" style="left:452px;top:329px;width:71px;height:41px;background:linear-gradient(#e2e5ea,#d9dde2 4%,#d7dbe1 19%,#cfd3dd 22%,#cfd3dd 88%,#d9dde1 91%,#d9dde1)"></div>
<div class="a" style="left:523px;top:329px;width:1px;height:41px;background:#b9c2d0"></div>
<div class="t" style="left:452px;width:71px;top:332px;text-align:center"><span class="sx" style="transform-origin:50% 50%;transform:scaleX(0.9746)">Delay</span></div>
<div class="a" style="left:524px;top:329px;width:179px;height:41px;background:linear-gradient(#e2e5ea,#d9dde2 4%,#d7dbe1 19%,#cfd3dd 22%,#cfd3dd 88%,#d9dde1 91%,#d9dde1)"></div>
<div class="a" style="left:703px;top:329px;width:1px;height:41px;background:#b9c2d0"></div>
<div class="t" style="left:524px;width:179px;top:332px;text-align:center"><span class="sx" style="transform-origin:50% 50%;transform:scaleX(1.0268)">Mod. Max Intvl</span></div>
<div class="a" style="left:704px;top:329px;width:107px;height:41px;background:linear-gradient(#e2e5ea,#d9dde2 4%,#d7dbe1 19%,#cfd3dd 22%,#cfd3dd 88%,#d9dde1 91%,#d9dde1)"></div>
<div class="a" style="left:811px;top:329px;width:1px;height:41px;background:#b9c2d0"></div>
<div class="t" style="left:704.5px;top:332px"><span class="sx" style="transform:scaleX(0.9912)">Max In...</span></div>
<div class="a" style="left:812px;top:329px;width:161px;height:41px;background:linear-gradient(#e2e5ea,#d9dde2 4%,#d7dbe1 19%,#cfd3dd 22%,#cfd3dd 88%,#d9dde1 91%,#d9dde1)"></div>
<div class="a" style="left:973px;top:329px;width:1px;height:41px;background:#b9c2d0"></div>
<div class="t" style="left:812px;width:161px;top:332px;text-align:center"><span class="sx" style="transform-origin:50% 50%;transform:scaleX(0.986)">Use schedule</span></div>
<div class="a" style="left:974px;top:329px;width:107px;height:41px;background:linear-gradient(#e2e5ea,#d9dde2 4%,#d7dbe1 19%,#cfd3dd 22%,#cfd3dd 88%,#d9dde1 91%,#d9dde1)"></div>
<div class="a" style="left:1081px;top:329px;width:1px;height:41px;background:#b9c2d0"></div>
<div class="t" style="left:973.5px;top:332px"><span class="sx" style="transform:scaleX(0.977)">Schedule</span></div>
<div class="a" style="left:1082px;top:329px;width:107px;height:41px;background:linear-gradient(#e2e5ea,#d9dde2 4%,#d7dbe1 19%,#cfd3dd 22%,#cfd3dd 88%,#d9dde1 91%,#d9dde1)"></div>
<div class="a" style="left:1189px;top:329px;width:1px;height:41px;background:#b9c2d0"></div>
<div class="t" style="left:1082px;top:332px"><span class="sx" style="transform:scaleX(0.9883)">Job</span></div>
<div class="a" style="left:1190px;top:329px;width:233px;height:41px;background:linear-gradient(#e2e5ea,#d9dde2 4%,#d7dbe1 19%,#cfd3dd 22%,#cfd3dd 88%,#d9dde1 91%,#d9dde1)"></div>
<div class="a" style="left:1423px;top:329px;width:1px;height:41px;background:#b9c2d0"></div>
<div class="t" style="left:1192px;top:332px"><span class="sx" style="transform:scaleX(0.9967)">AS Instance</span></div>
<div class="a" style="left:1424px;top:329px;width:71px;height:41px;background:linear-gradient(#e2e5ea,#d9dde2 4%,#d7dbe1 19%,#cfd3dd 22%,#cfd3dd 88%,#d9dde1 91%,#d9dde1)"></div>
<div class="a" style="left:1495px;top:329px;width:1px;height:41px;background:#b9c2d0"></div>
<div class="t" style="left:1424.5px;top:332px"><span class="sx" style="transform:scaleX(1.0527)">Index</span></div>
<div class="a" style="left:1496px;top:329px;width:89px;height:41px;background:linear-gradient(#e2e5ea,#d9dde2 4%,#d7dbe1 19%,#cfd3dd 22%,#cfd3dd 88%,#d9dde1 91%,#d9dde1)"></div>
<div class="a" style="left:1585px;top:329px;width:1px;height:41px;background:#b9c2d0"></div>
<div class="t" style="left:1496px;width:89px;top:332px;text-align:center"><span class="sx" style="transform-origin:50% 50%;transform:scaleX(0.9836)">Active</span></div>
<div class="a" style="left:1586px;top:329px;width:557px;height:41px;background:linear-gradient(#e2e5ea,#d9dde2 4%,#d7dbe1 19%,#cfd3dd 22%,#cfd3dd 88%,#d9dde1 91%,#d9dde1)"></div>
<div class="a" style="left:2143px;top:329px;width:1px;height:41px;background:#b9c2d0"></div>
<div class="t" style="left:1586.5px;top:332px"><span class="sx" style="transform:scaleX(0.9836)">Category</span></div>
<div class="a" style="left:90px;top:329px;width:2px;height:41px;background:#c2d2e4"></div>
<div class="a" style="left:91px;top:329px;width:1px;height:41px;background:#aebace"></div>
<div class="a" style="left:45px;top:370px;width:2153px;height:1px;background:#b4c0d0"></div>
<div class="selc" style="left:45px;top:371px;width:46px;height:37px"></div>
<div class="a" style="left:92px;top:371px;width:269px;height:36px;background:#fff"></div>
<div class="a" style="left:362px;top:371px;width:89px;height:36px;background:#fff"></div>
<div class="a" style="left:452px;top:371px;width:71px;height:36px;background:#fff"></div>
<div class="a" style="left:524px;top:371px;width:179px;height:36px;background:#fff"></div>
<div class="a" style="left:704px;top:371px;width:107px;height:36px;background:#dfeaf5"></div>
<div class="a" style="left:812px;top:371px;width:161px;height:36px;background:#fff"></div>
<div class="a" style="left:974px;top:371px;width:107px;height:36px;background:#fff"></div>
<div class="a" style="left:1082px;top:371px;width:107px;height:36px;background:#dfeaf5"></div>
<div class="a" style="left:1190px;top:371px;width:233px;height:36px;background:#fff"></div>
<div class="a" style="left:1424px;top:371px;width:71px;height:36px;background:#fff"></div>
<div class="a" style="left:1496px;top:371px;width:89px;height:36px;background:#fff"></div>
<div class="a" style="left:1586px;top:371px;width:557px;height:36px;background:#dfeaf5"></div>
<div class="t" style="left:93.5px;top:369.5px"><span class="sx" style="transform:scaleX(0.9385)">ST06_HW</span></div>
<div class="t r" style="left:362px;width:85.5px;top:369.5px"><span class="sx" style="transform-origin:100% 50%;transform:scaleX(0.981)">99999</span></div>
<div class="t r" style="left:704px;width:103.5px;top:369.5px"><span class="sx" style="transform-origin:100% 50%;transform:scaleX(0.981)">1499985</span></div>
<div class="t" style="left:1587px;top:369.5px"><span class="sx" style="transform:scaleX(0.9842)">Performance</span></div>
<div class="cb" style="left:601px;top:376px"></div>
<div class="cb" style="left:880px;top:376px"></div>
<div class="cb" style="left:1528px;top:376px"></div>
<svg class="a" style="left:1528px;top:376px" width="27" height="27" viewBox="0 0 27 27"><path d="M7.2 12.2L12.4 20.3 19.9 5.6" fill="none" stroke="#27274b" stroke-width="3.7" stroke-linejoin="miter"/></svg>
<div class="sbtn" style="left:974px;top:371px;width:107px;height:36px"></div>
<svg class="a" style="left:1011px;top:375px" width="32" height="30" viewBox="0 0 32 30"><rect x="1.200" y="13.200" width="20.500" height="15.500" fill="#dcdcdc" stroke="#6aaa14" stroke-width="2.400"/><path d="M10 17h10v6" fill="none" stroke="#7d8590" stroke-width="2.600"/><path d="M9 5h11V0.500l11 8.500-11 8.500V14H9z" fill="#ffc61a" stroke="#4f4f55" stroke-width="1.800" stroke-linejoin="miter"/></svg>
<svg class="a" style="left:1082px;top:378px" width="60" height="15" viewBox="0 0 60 15"><ellipse cx="9.8" cy="7.500" rx="9" ry="6.300" fill="#ececec" stroke="#4e4e4e" stroke-width="1.700"/><ellipse cx="29.0" cy="7.500" rx="9" ry="6.300" fill="#ececec" stroke="#4e4e4e" stroke-width="1.700"/><ellipse cx="48.2" cy="7.500" rx="9" ry="6.300" fill="#ececec" stroke="#4e4e4e" stroke-width="1.700"/></svg>
<div class="selc" style="left:45px;top:408px;width:46px;height:37px"></div>
<div class="a" style="left:92px;top:408px;width:269px;height:36px;background:#fff"></div>
<div class="a" style="left:362px;top:408px;width:89px;height:36px;background:#fff"></div>
<div class="a" style="left:452px;top:408px;width:71px;height:36px;background:#fff"></div>
<div class="a" style="left:524px;top:408px;width:179px;height:36px;background:#fff"></div>
<div class="a" style="left:704px;top:408px;width:107px;height:36px;background:#dfeaf5"></div>
<div class="a" style="left:812px;top:408px;width:161px;height:36px;background:#fff"></div>
<div class="a" style="left:974px;top:408px;width:107px;height:36px;background:#fff"></div>
<div class="a" style="left:1082px;top:408px;width:107px;height:36px;background:#dfeaf5"></div>
<div class="a" style="left:1190px;top:408px;width:233px;height:36px;background:#fff"></div>
<div class="a" style="left:1424px;top:408px;width:71px;height:36px;background:#fff"></div>
<div class="a" style="left:1496px;top:408px;width:89px;height:36px;background:#fff"></div>
<div class="a" style="left:1586px;top:408px;width:557px;height:36px;background:#dfeaf5"></div>
<div class="t" style="left:93.5px;top:406.5px"><span class="sx" style="transform:scaleX(0.924)">ST06_SN_DISK</span></div>
<div class="t r" style="left:362px;width:85.5px;top:406.5px"><span class="sx" style="transform-origin:100% 50%;transform:scaleX(0.981)">3600</span></div>
<div class="t r" style="left:704px;width:103.5px;top:406.5px"><span class="sx" style="transform-origin:100% 50%;transform:scaleX(0.981)">54000</span></div>
<div class="t" style="left:1587px;top:406.5px"><span class="sx" style="transform:scaleX(0.9962)">ITSI,Performance</span></div>
<div class="cb" style="left:601px;top:413px"></div>
<div class="cb" style="left:880px;top:413px"></div>
<div class="cb" style="left:1528px;top:413px"></div>
<svg class="a" style="left:1528px;top:413px" width="27" height="27" viewBox="0 0 27 27"><path d="M7.2 12.2L12.4 20.3 19.9 5.6" fill="none" stroke="#27274b" stroke-width="3.7" stroke-linejoin="miter"/></svg>
<div class="sbtn" style="left:974px;top:408px;width:107px;height:36px"></div>
<svg class="a" style="left:1011px;top:412px" width="32" height="30" viewBox="0 0 32 30"><rect x="1.200" y="13.200" width="20.500" height="15.500" fill="#dcdcdc" stroke="#6aaa14" stroke-width="2.400"/><path d="M10 17h10v6" fill="none" stroke="#7d8590" stroke-width="2.600"/><path d="M9 5h11V0.500l11 8.500-11 8.500V14H9z" fill="#ffc61a" stroke="#4f4f55" stroke-width="1.800" stroke-linejoin="miter"/></svg>
<svg class="a" style="left:1082px;top:415px" width="60" height="15" viewBox="0 0 60 15"><ellipse cx="9.8" cy="7.500" rx="9" ry="6.300" fill="#ececec" stroke="#4e4e4e" stroke-width="1.700"/><ellipse cx="29.0" cy="7.500" rx="9" ry="6.300" fill="#ececec" stroke="#4e4e4e" stroke-width="1.700"/><ellipse cx="48.2" cy="7.500" rx="9" ry="6.300" fill="#ececec" stroke="#4e4e4e" stroke-width="1.700"/></svg>
<div class="selc" style="left:45px;top:445px;width:46px;height:37px"></div>
<div class="a" style="left:92px;top:445px;width:269px;height:36px;background:#fff"></div>
<div class="a" style="left:362px;top:445px;width:89px;height:36px;background:#fff"></div>
<div class="a" style="left:452px;top:445px;width:71px;height:36px;background:#fff"></div>
<div class="a" style="left:524px;top:445px;width:179px;height:36px;background:#fff"></div>
<div class="a" style="left:704px;top:445px;width:107px;height:36px;background:#dfeaf5"></div>
<div class="a" style="left:812px;top:445px;width:161px;height:36px;background:#fff"></div>
<div class="a" style="left:974px;top:445px;width:107px;height:36px;background:#fff"></div>
<div class="a" style="left:1082px;top:445px;width:107px;height:36px;background:#dfeaf5"></div>
<div class="a" style="left:1190px;top:445px;width:233px;height:36px;background:#fff"></div>
<div class="a" style="left:1424px;top:445px;width:71px;height:36px;background:#fff"></div>
<div class="a" style="left:1496px;top:445px;width:89px;height:36px;background:#fff"></div>
<div class="a" style="left:1586px;top:445px;width:557px;height:36px;background:#dfeaf5"></div>
<div class="t" style="left:93.5px;top:443.5px"><span class="sx" style="transform:scaleX(0.9077)">ST06_TOP_CPU</span></div>
<div class="t r" style="left:362px;width:85.5px;top:443.5px"><span class="sx" style="transform-origin:100% 50%;transform:scaleX(0.981)">300</span></div>
<div class="t r" style="left:704px;width:103.5px;top:443.5px"><span class="sx" style="transform-origin:100% 50%;transform:scaleX(0.981)">4500</span></div>
<div class="t" style="left:1587px;top:443.5px"><span class="sx" style="transform:scaleX(0.9842)">Performance</span></div>
<div class="cb" style="left:601px;top:450px"></div>
<div class="cb" style="left:880px;top:450px"></div>
<div class="cb" style="left:1528px;top:450px"></div>
<svg class="a" style="left:1528px;top:450px" width="27" height="27" viewBox="0 0 27 27"><path d="M7.2 12.2L12.4 20.3 19.9 5.6" fill="none" stroke="#27274b" stroke-width="3.7" stroke-linejoin="miter"/></svg>
<div class="sbtn" style="left:974px;top:445px;width:107px;height:36px"></div>
<svg class="a" style="left:1011px;top:449px" width="32" height="30" viewBox="0 0 32 30"><rect x="1.200" y="13.200" width="20.500" height="15.500" fill="#dcdcdc" stroke="#6aaa14" stroke-width="2.400"/><path d="M10 17h10v6" fill="none" stroke="#7d8590" stroke-width="2.600"/><path d="M9 5h11V0.500l11 8.500-11 8.500V14H9z" fill="#ffc61a" stroke="#4f4f55" stroke-width="1.800" stroke-linejoin="miter"/></svg>
<svg class="a" style="left:1082px;top:452px" width="60" height="15" viewBox="0 0 60 15"><ellipse cx="9.8" cy="7.500" rx="9" ry="6.300" fill="#ececec" stroke="#4e4e4e" stroke-width="1.700"/><ellipse cx="29.0" cy="7.500" rx="9" ry="6.300" fill="#ececec" stroke="#4e4e4e" stroke-width="1.700"/><ellipse cx="48.2" cy="7.500" rx="9" ry="6.300" fill="#ececec" stroke="#4e4e4e" stroke-width="1.700"/></svg>
<div class="selc" style="left:45px;top:482px;width:46px;height:37px"></div>
<div class="a" style="left:92px;top:482px;width:269px;height:36px;background:#fff"></div>
<div class="a" style="left:362px;top:482px;width:89px;height:36px;background:#fff"></div>
<div class="a" style="left:452px;top:482px;width:71px;height:36px;background:#fff"></div>
<div class="a" style="left:524px;top:482px;width:179px;height:36px;background:#fff"></div>
<div class="a" style="left:704px;top:482px;width:107px;height:36px;background:#dfeaf5"></div>
<div class="a" style="left:812px;top:482px;width:161px;height:36px;background:#fff"></div>
<div class="a" style="left:974px;top:482px;width:107px;height:36px;background:#fff"></div>
<div class="a" style="left:1082px;top:482px;width:107px;height:36px;background:#dfeaf5"></div>
<div class="a" style="left:1190px;top:482px;width:233px;height:36px;background:#fff"></div>
<div class="a" style="left:1424px;top:482px;width:71px;height:36px;background:#fff"></div>
<div class="a" style="left:1496px;top:482px;width:89px;height:36px;background:#fff"></div>
<div class="a" style="left:1586px;top:482px;width:557px;height:36px;background:#dfeaf5"></div>
<div class="t" style="left:93.5px;top:480.5px"><span class="sx" style="transform:scaleX(0.9309)">ST10</span></div>
<div class="t r" style="left:362px;width:85.5px;top:480.5px"><span class="sx" style="transform-origin:100% 50%;transform:scaleX(0.981)">86400</span></div>
<div class="t r" style="left:704px;width:103.5px;top:480.5px"><span class="sx" style="transform-origin:100% 50%;transform:scaleX(0.981)">1296000</span></div>
<div class="t" style="left:1587px;top:480.5px"><span class="sx" style="transform:scaleX(0.9842)">Performance</span></div>
<div class="cb" style="left:601px;top:487px"></div>
<div class="cb" style="left:880px;top:487px"></div>
<div class="cb" style="left:1528px;top:487px"></div>
<svg class="a" style="left:1528px;top:487px" width="27" height="27" viewBox="0 0 27 27"><path d="M7.2 12.2L12.4 20.3 19.9 5.6" fill="none" stroke="#27274b" stroke-width="3.7" stroke-linejoin="miter"/></svg>
<div class="sbtn" style="left:974px;top:482px;width:107px;height:36px"></div>
<svg class="a" style="left:1011px;top:486px" width="32" height="30" viewBox="0 0 32 30"><rect x="1.200" y="13.200" width="20.500" height="15.500" fill="#dcdcdc" stroke="#6aaa14" stroke-width="2.400"/><path d="M10 17h10v6" fill="none" stroke="#7d8590" stroke-width="2.600"/><path d="M9 5h11V0.500l11 8.500-11 8.500V14H9z" fill="#ffc61a" stroke="#4f4f55" stroke-width="1.800" stroke-linejoin="miter"/></svg>
<svg class="a" style="left:1082px;top:489px" width="60" height="15" viewBox="0 0 60 15"><ellipse cx="9.8" cy="7.500" rx="9" ry="6.300" fill="#ececec" stroke="#4e4e4e" stroke-width="1.700"/><ellipse cx="29.0" cy="7.500" rx="9" ry="6.300" fill="#ececec" stroke="#4e4e4e" stroke-width="1.700"/><ellipse cx="48.2" cy="7.500" rx="9" ry="6.300" fill="#ececec" stroke="#4e4e4e" stroke-width="1.700"/></svg>
<div class="selc" style="left:45px;top:519px;width:46px;height:37px"></div>
<div class="a" style="left:92px;top:519px;width:269px;height:36px;background:#fff"></div>
<div class="a" style="left:362px;top:519px;width:89px;height:36px;background:#fff"></div>
<div class="a" style="left:452px;top:519px;width:71px;height:36px;background:#fff"></div>
<div class="a" style="left:524px;top:519px;width:179px;height:36px;background:#fff"></div>
<div class="a" style="left:704px;top:519px;width:107px;height:36px;background:#dfeaf5"></div>
<div class="a" style="left:812px;top:519px;width:161px;height:36px;background:#fff"></div>
<div class="a" style="left:974px;top:519px;width:107px;height:36px;background:#fff"></div>
<div class="a" style="left:1082px;top:519px;width:107px;height:36px;background:#dfeaf5"></div>
<div class="a" style="left:1190px;top:519px;width:233px;height:36px;background:#fff"></div>
<div class="a" style="left:1424px;top:519px;width:71px;height:36px;background:#fff"></div>
<div class="a" style="left:1496px;top:519px;width:89px;height:36px;background:#fff"></div>
<div class="a" style="left:1586px;top:519px;width:557px;height:36px;background:#dfeaf5"></div>
<div class="t" style="left:93.5px;top:517.5px"><span class="sx" style="transform:scaleX(0.9309)">ST22</span></div>
<div class="t r" style="left:362px;width:85.5px;top:517.5px"><span class="sx" style="transform-origin:100% 50%;transform:scaleX(0.981)">300</span></div>
<div class="t r" style="left:704px;width:103.5px;top:517.5px"><span class="sx" style="transform-origin:100% 50%;transform:scaleX(0.981)">4500</span></div>
<div class="t" style="left:1587px;top:517.5px"><span class="sx" style="transform:scaleX(0.9736)">BPM,ITSI,Performance</span></div>
<div class="cb" style="left:601px;top:524px"></div>
<div class="cb" style="left:880px;top:524px"></div>
<div class="cb" style="left:1528px;top:524px"></div>
<svg class="a" style="left:1528px;top:524px" width="27" height="27" viewBox="0 0 27 27"><path d="M7.2 12.2L12.4 20.3 19.9 5.6" fill="none" stroke="#27274b" stroke-width="3.7" stroke-linejoin="miter"/></svg>
<div class="sbtn" style="left:974px;top:519px;width:107px;height:36px"></div>
<svg class="a" style="left:1011px;top:523px" width="32" height="30" viewBox="0 0 32 30"><rect x="1.200" y="13.200" width="20.500" height="15.500" fill="#dcdcdc" stroke="#6aaa14" stroke-width="2.400"/><path d="M10 17h10v6" fill="none" stroke="#7d8590" stroke-width="2.600"/><path d="M9 5h11V0.500l11 8.500-11 8.500V14H9z" fill="#ffc61a" stroke="#4f4f55" stroke-width="1.800" stroke-linejoin="miter"/></svg>
<svg class="a" style="left:1082px;top:526px" width="60" height="15" viewBox="0 0 60 15"><ellipse cx="9.8" cy="7.500" rx="9" ry="6.300" fill="#ececec" stroke="#4e4e4e" stroke-width="1.700"/><ellipse cx="29.0" cy="7.500" rx="9" ry="6.300" fill="#ececec" stroke="#4e4e4e" stroke-width="1.700"/><ellipse cx="48.2" cy="7.500" rx="9" ry="6.300" fill="#ececec" stroke="#4e4e4e" stroke-width="1.700"/></svg>
<div class="selc" style="left:45px;top:556px;width:46px;height:37px"></div>
<div class="a" style="left:92px;top:556px;width:269px;height:36px;background:#fff"></div>
<div class="a" style="left:362px;top:556px;width:89px;height:36px;background:#fff"></div>
<div class="a" style="left:452px;top:556px;width:71px;height:36px;background:#fff"></div>
<div class="a" style="left:524px;top:556px;width:179px;height:36px;background:#fff"></div>
<div class="a" style="left:704px;top:556px;width:107px;height:36px;background:#dfeaf5"></div>
<div class="a" style="left:812px;top:556px;width:161px;height:36px;background:#fff"></div>
<div class="a" style="left:974px;top:556px;width:107px;height:36px;background:#fff"></div>
<div class="a" style="left:1082px;top:556px;width:107px;height:36px;background:#dfeaf5"></div>
<div class="a" style="left:1190px;top:556px;width:233px;height:36px;background:#fff"></div>
<div class="a" style="left:1424px;top:556px;width:71px;height:36px;background:#fff"></div>
<div class="a" style="left:1496px;top:556px;width:89px;height:36px;background:#fff"></div>
<div class="a" style="left:1586px;top:556px;width:557px;height:36px;background:#dfeaf5"></div>
<div class="t" style="left:93.5px;top:554.5px"><span class="sx" style="transform:scaleX(0.9516)">STAD</span></div>
<div class="t r" style="left:362px;width:85.5px;top:554.5px"><span class="sx" style="transform-origin:100% 50%;transform:scaleX(0.981)">30</span></div>
<div class="t r" style="left:704px;width:103.5px;top:554.5px"><span class="sx" style="transform-origin:100% 50%;transform:scaleX(0.981)">450</span></div>
<div class="t" style="left:1587px;top:554.5px"><span class="sx" style="transform:scaleX(0.9812)">Performance,Security</span></div>
<div class="cb" style="left:601px;top:561px"></div>
<div class="cb" style="left:880px;top:561px"></div>
<div class="cb" style="left:1528px;top:561px"></div>
<svg class="a" style="left:1528px;top:561px" width="27" height="27" viewBox="0 0 27 27"><path d="M7.2 12.2L12.4 20.3 19.9 5.6" fill="none" stroke="#27274b" stroke-width="3.7" stroke-linejoin="miter"/></svg>
<div class="sbtn" style="left:974px;top:556px;width:107px;height:36px"></div>
<svg class="a" style="left:1011px;top:560px" width="32" height="30" viewBox="0 0 32 30"><rect x="1.200" y="13.200" width="20.500" height="15.500" fill="#dcdcdc" stroke="#6aaa14" stroke-width="2.400"/><path d="M10 17h10v6" fill="none" stroke="#7d8590" stroke-width="2.600"/><path d="M9 5h11V0.500l11 8.500-11 8.500V14H9z" fill="#ffc61a" stroke="#4f4f55" stroke-width="1.800" stroke-linejoin="miter"/></svg>
<svg class="a" style="left:1082px;top:563px" width="60" height="15" viewBox="0 0 60 15"><ellipse cx="9.8" cy="7.500" rx="9" ry="6.300" fill="#ececec" stroke="#4e4e4e" stroke-width="1.700"/><ellipse cx="29.0" cy="7.500" rx="9" ry="6.300" fill="#ececec" stroke="#4e4e4e" stroke-width="1.700"/><ellipse cx="48.2" cy="7.500" rx="9" ry="6.300" fill="#ececec" stroke="#4e4e4e" stroke-width="1.700"/></svg>
<div class="selc" style="left:45px;top:593px;width:46px;height:37px"></div>
<div class="a" style="left:92px;top:593px;width:269px;height:36px;background:#fff"></div>
<div class="a" style="left:362px;top:593px;width:89px;height:36px;background:#fff"></div>
<div class="a" style="left:452px;top:593px;width:71px;height:36px;background:#fff"></div>
<div class="a" style="left:524px;top:593px;width:179px;height:36px;background:#fff"></div>
<div class="a" style="left:704px;top:593px;width:107px;height:36px;background:#dfeaf5"></div>
<div class="a" style="left:812px;top:593px;width:161px;height:36px;background:#fff"></div>
<div class="a" style="left:974px;top:593px;width:107px;height:36px;background:#fff"></div>
<div class="a" style="left:1082px;top:593px;width:107px;height:36px;background:#dfeaf5"></div>
<div class="a" style="left:1190px;top:593px;width:233px;height:36px;background:#fff"></div>
<div class="a" style="left:1424px;top:593px;width:71px;height:36px;background:#fff"></div>
<div class="a" style="left:1496px;top:593px;width:89px;height:36px;background:#fff"></div>
<div class="a" style="left:1586px;top:593px;width:557px;height:36px;background:#dfeaf5"></div>
<div class="t" style="left:93.5px;top:591.5px"><span class="sx" style="transform:scaleX(0.9468)">STAD3</span></div>
<div class="t r" style="left:362px;width:85.5px;top:591.5px"><span class="sx" style="transform-origin:100% 50%;transform:scaleX(0.981)">30</span></div>
<div class="t r" style="left:704px;width:103.5px;top:591.5px"><span class="sx" style="transform-origin:100% 50%;transform:scaleX(0.981)">450</span></div>
<div class="t" style="left:1587px;top:591.5px"><span class="sx" style="transform:scaleX(0.9842)">Performance</span></div>
<div class="cb" style="left:601px;top:598px"></div>
<div class="cb" style="left:880px;top:598px"></div>
<div class="cb" style="left:1528px;top:598px"></div>
<svg class="a" style="left:1528px;top:598px" width="27" height="27" viewBox="0 0 27 27"><path d="M7.2 12.2L12.4 20.3 19.9 5.6" fill="none" stroke="#27274b" stroke-width="3.7" stroke-linejoin="miter"/></svg>
<div class="sbtn" style="left:974px;top:593px;width:107px;height:36px"></div>
<svg class="a" style="left:1011px;top:597px" width="32" height="30" viewBox="0 0 32 30"><rect x="1.200" y="13.200" width="20.500" height="15.500" fill="#dcdcdc" stroke="#6aaa14" stroke-width="2.400"/><path d="M10 17h10v6" fill="none" stroke="#7d8590" stroke-width="2.600"/><path d="M9 5h11V0.500l11 8.500-11 8.500V14H9z" fill="#ffc61a" stroke="#4f4f55" stroke-width="1.800" stroke-linejoin="miter"/></svg>
<svg class="a" style="left:1082px;top:600px" width="60" height="15" viewBox="0 0 60 15"><ellipse cx="9.8" cy="7.500" rx="9" ry="6.300" fill="#ececec" stroke="#4e4e4e" stroke-width="1.700"/><ellipse cx="29.0" cy="7.500" rx="9" ry="6.300" fill="#ececec" stroke="#4e4e4e" stroke-width="1.700"/><ellipse cx="48.2" cy="7.500" rx="9" ry="6.300" fill="#ececec" stroke="#4e4e4e" stroke-width="1.700"/></svg>
<div class="selc" style="left:45px;top:630px;width:46px;height:37px"></div>
<div class="a" style="left:92px;top:630px;width:269px;height:36px;background:#fff"></div>
<div class="a" style="left:362px;top:630px;width:89px;height:36px;background:#fff"></div>
<div class="a" style="left:452px;top:630px;width:71px;height:36px;background:#fff"></div>
<div class="a" style="left:524px;top:630px;width:179px;height:36px;background:#fff"></div>
<div class="a" style="left:704px;top:630px;width:107px;height:36px;background:#dfeaf5"></div>
<div class="a" style="left:812px;top:630px;width:161px;height:36px;background:#fff"></div>
<div class="a" style="left:974px;top:630px;width:107px;height:36px;background:#fff"></div>
<div class="a" style="left:1082px;top:630px;width:107px;height:36px;background:#dfeaf5"></div>
<div class="a" style="left:1190px;top:630px;width:233px;height:36px;background:#fff"></div>
<div class="a" style="left:1424px;top:630px;width:71px;height:36px;background:#fff"></div>
<div class="a" style="left:1496px;top:630px;width:89px;height:36px;background:#fff"></div>
<div class="a" style="left:1586px;top:630px;width:557px;height:36px;background:#dfeaf5"></div>
<div class="t" style="left:93.5px;top:628.5px"><span class="sx" style="transform:scaleX(0.8827)">STMS</span></div>
<div class="t r" style="left:362px;width:85.5px;top:628.5px"><span class="sx" style="transform-origin:100% 50%;transform:scaleX(0.981)">3600</span></div>
<div class="t r" style="left:704px;width:103.5px;top:628.5px"><span class="sx" style="transform-origin:100% 50%;transform:scaleX(0.981)">54000</span></div>
<div class="t" style="left:1587px;top:628.5px"><span class="sx" style="transform:scaleX(0.9689)">BPM,ITSI,Security</span></div>
<div class="cb" style="left:601px;top:635px"></div>
<div class="cb" style="left:880px;top:635px"></div>
<div class="cb" style="left:1528px;top:635px"></div>
<svg class="a" style="left:1528px;top:635px" width="27" height="27" viewBox="0 0 27 27"><path d="M7.2 12.2L12.4 20.3 19.9 5.6" fill="none" stroke="#27274b" stroke-width="3.7" stroke-linejoin="miter"/></svg>
<div class="sbtn" style="left:974px;top:630px;width:107px;height:36px"></div>
<svg class="a" style="left:1011px;top:634px" width="32" height="30" viewBox="0 0 32 30"><rect x="1.200" y="13.200" width="20.500" height="15.500" fill="#dcdcdc" stroke="#6aaa14" stroke-width="2.400"/><path d="M10 17h10v6" fill="none" stroke="#7d8590" stroke-width="2.600"/><path d="M9 5h11V0.500l11 8.500-11 8.500V14H9z" fill="#ffc61a" stroke="#4f4f55" stroke-width="1.800" stroke-linejoin="miter"/></svg>
<svg class="a" style="left:1082px;top:637px" width="60" height="15" viewBox="0 0 60 15"><ellipse cx="9.8" cy="7.500" rx="9" ry="6.300" fill="#ececec" stroke="#4e4e4e" stroke-width="1.700"/><ellipse cx="29.0" cy="7.500" rx="9" ry="6.300" fill="#ececec" stroke="#4e4e4e" stroke-width="1.700"/><ellipse cx="48.2" cy="7.500" rx="9" ry="6.300" fill="#ececec" stroke="#4e4e4e" stroke-width="1.700"/></svg>
<div class="selc" style="left:45px;top:667px;width:46px;height:37px"></div>
<div class="a" style="left:92px;top:667px;width:269px;height:36px;background:#fff"></div>
<div class="a" style="left:362px;top:667px;width:89px;height:36px;background:#fff"></div>
<div class="a" style="left:452px;top:667px;width:71px;height:36px;background:#fff"></div>
<div class="a" style="left:524px;top:667px;width:179px;height:36px;background:#fff"></div>
<div class="a" style="left:704px;top:667px;width:107px;height:36px;background:#dfeaf5"></div>
<div class="a" style="left:812px;top:667px;width:161px;height:36px;background:#fff"></div>
<div class="a" style="left:974px;top:667px;width:107px;height:36px;background:#fff"></div>
<div class="a" style="left:1082px;top:667px;width:107px;height:36px;background:#dfeaf5"></div>
<div class="a" style="left:1190px;top:667px;width:233px;height:36px;background:#fff"></div>
<div class="a" style="left:1424px;top:667px;width:71px;height:36px;background:#fff"></div>
<div class="a" style="left:1496px;top:667px;width:89px;height:36px;background:#fff"></div>
<div class="a" style="left:1586px;top:667px;width:557px;height:36px;background:#dfeaf5"></div>
<div class="t" style="left:93.5px;top:665.5px"><span class="sx" style="transform:scaleX(0.8941)">STMS_ROUTE</span></div>
<div class="t r" style="left:362px;width:85.5px;top:665.5px"><span class="sx" style="transform-origin:100% 50%;transform:scaleX(0.981)">86400</span></div>
<div class="t r" style="left:704px;width:103.5px;top:665.5px"><span class="sx" style="transform-origin:100% 50%;transform:scaleX(0.981)">1296000</span></div>
<div class="t" style="left:1587px;top:665.5px"><span class="sx" style="transform:scaleX(0.9573)">BPM,Performance</span></div>
<div class="cb" style="left:601px;top:672px"></div>
<div class="cb" style="left:880px;top:672px"></div>
<div class="cb" style="left:1528px;top:672px"></div>
<svg class="a" style="left:1528px;top:672px" width="27" height="27" viewBox="0 0 27 27"><path d="M7.2 12.2L12.4 20.3 19.9 5.6" fill="none" stroke="#27274b" stroke-width="3.7" stroke-linejoin="miter"/></svg>
<div class="sbtn" style="left:974px;top:667px;width:107px;height:36px"></div>
<svg class="a" style="left:1011px;top:671px" width="32" height="30" viewBox="0 0 32 30"><rect x="1.200" y="13.200" width="20.500" height="15.500" fill="#dcdcdc" stroke="#6aaa14" stroke-width="2.400"/><path d="M10 17h10v6" fill="none" stroke="#7d8590" stroke-width="2.600"/><path d="M9 5h11V0.500l11 8.500-11 8.500V14H9z" fill="#ffc61a" stroke="#4f4f55" stroke-width="1.800" stroke-linejoin="miter"/></svg>
<svg class="a" style="left:1082px;top:674px" width="60" height="15" viewBox="0 0 60 15"><ellipse cx="9.8" cy="7.500" rx="9" ry="6.300" fill="#ececec" stroke="#4e4e4e" stroke-width="1.700"/><ellipse cx="29.0" cy="7.500" rx="9" ry="6.300" fill="#ececec" stroke="#4e4e4e" stroke-width="1.700"/><ellipse cx="48.2" cy="7.500" rx="9" ry="6.300" fill="#ececec" stroke="#4e4e4e" stroke-width="1.700"/></svg>
<div class="selc" style="left:45px;top:704px;width:46px;height:37px"></div>
<div class="a" style="left:92px;top:704px;width:269px;height:36px;background:#fff"></div>
<div class="a" style="left:362px;top:704px;width:89px;height:36px;background:#fff"></div>
<div class="a" style="left:452px;top:704px;width:71px;height:36px;background:#fff"></div>
<div class="a" style="left:524px;top:704px;width:179px;height:36px;background:#fff"></div>
<div class="a" style="left:704px;top:704px;width:107px;height:36px;background:#dfeaf5"></div>
<div class="a" style="left:812px;top:704px;width:161px;height:36px;background:#fff"></div>
<div class="a" style="left:974px;top:704px;width:107px;height:36px;background:#fff"></div>
<div class="a" style="left:1082px;top:704px;width:107px;height:36px;background:#dfeaf5"></div>
<div class="a" style="left:1190px;top:704px;width:233px;height:36px;background:#fff"></div>
<div class="a" style="left:1424px;top:704px;width:71px;height:36px;background:#fff"></div>
<div class="a" style="left:1496px;top:704px;width:89px;height:36px;background:#fff"></div>
<div class="a" style="left:1586px;top:704px;width:557px;height:36px;background:#dfeaf5"></div>
<div class="t" style="left:93.5px;top:702.5px"><span class="sx" style="transform:scaleX(0.873)">STRUST</span></div>
<div class="t r" style="left:362px;width:85.5px;top:702.5px"><span class="sx" style="transform-origin:100% 50%;transform:scaleX(0.981)">86400</span></div>
<div class="t r" style="left:704px;width:103.5px;top:702.5px"><span class="sx" style="transform-origin:100% 50%;transform:scaleX(0.981)">1296000</span></div>
<div class="t" style="left:1587px;top:702.5px"><span class="sx" style="transform:scaleX(1.0025)">ITSI,Security</span></div>
<div class="cb" style="left:601px;top:709px"></div>
<div class="cb" style="left:880px;top:709px"></div>
<div class="cb" style="left:1528px;top:709px"></div>
<svg class="a" style="left:1528px;top:709px" width="27" height="27" viewBox="0 0 27 27"><path d="M7.2 12.2L12.4 20.3 19.9 5.6" fill="none" stroke="#27274b" stroke-width="3.7" stroke-linejoin="miter"/></svg>
<div class="sbtn" style="left:974px;top:704px;width:107px;height:36px"></div>
<svg class="a" style="left:1011px;top:708px" width="32" height="30" viewBox="0 0 32 30"><rect x="1.200" y="13.200" width="20.500" height="15.500" fill="#dcdcdc" stroke="#6aaa14" stroke-width="2.400"/><path d="M10 17h10v6" fill="none" stroke="#7d8590" stroke-width="2.600"/><path d="M9 5h11V0.500l11 8.500-11 8.500V14H9z" fill="#ffc61a" stroke="#4f4f55" stroke-width="1.800" stroke-linejoin="miter"/></svg>
<svg class="a" style="left:1082px;top:711px" width="60" height="15" viewBox="0 0 60 15"><ellipse cx="9.8" cy="7.500" rx="9" ry="6.300" fill="#ececec" stroke="#4e4e4e" stroke-width="1.700"/><ellipse cx="29.0" cy="7.500" rx="9" ry="6.300" fill="#ececec" stroke="#4e4e4e" stroke-width="1.700"/><ellipse cx="48.2" cy="7.500" rx="9" ry="6.300" fill="#ececec" stroke="#4e4e4e" stroke-width="1.700"/></svg>
<div class="selc" style="left:45px;top:741px;width:46px;height:37px"></div>
<div class="a" style="left:92px;top:741px;width:269px;height:36px;background:#fff"></div>
<div class="a" style="left:362px;top:741px;width:89px;height:36px;background:#fff"></div>
<div class="a" style="left:452px;top:741px;width:71px;height:36px;background:#fff"></div>
<div class="a" style="left:524px;top:741px;width:179px;height:36px;background:#fff"></div>
<div class="a" style="left:704px;top:741px;width:107px;height:36px;background:#dfeaf5"></div>
<div class="a" style="left:812px;top:741px;width:161px;height:36px;background:#fff"></div>
<div class="a" style="left:974px;top:741px;width:107px;height:36px;background:#fff"></div>
<div class="a" style="left:1082px;top:741px;width:107px;height:36px;background:#dfeaf5"></div>
<div class="a" style="left:1190px;top:741px;width:233px;height:36px;background:#fff"></div>
<div class="a" style="left:1424px;top:741px;width:71px;height:36px;background:#fff"></div>
<div class="a" style="left:1496px;top:741px;width:89px;height:36px;background:#fff"></div>
<div class="a" style="left:1586px;top:741px;width:557px;height:36px;background:#dfeaf5"></div>
<div class="t" style="left:93.5px;top:739.5px"><span class="sx" style="transform:scaleX(0.8985)">SU01</span></div>
<div class="t r" style="left:362px;width:85.5px;top:739.5px"><span class="sx" style="transform-origin:100% 50%;transform:scaleX(0.981)">600</span></div>
<div class="t r" style="left:704px;width:103.5px;top:739.5px"><span class="sx" style="transform-origin:100% 50%;transform:scaleX(0.981)">9000</span></div>
<div class="t" style="left:1587px;top:739.5px"><span class="sx" style="transform:scaleX(1.0025)">ITSI,Security</span></div>
<div class="cb" style="left:601px;top:746px"></div>
<div class="cb" style="left:880px;top:746px"></div>
<div class="cb" style="left:1528px;top:746px"></div>
<svg class="a" style="left:1528px;top:746px" width="27" height="27" viewBox="0 0 27 27"><path d="M7.2 12.2L12.4 20.3 19.9 5.6" fill="none" stroke="#27274b" stroke-width="3.7" stroke-linejoin="miter"/></svg>
<div class="sbtn" style="left:974px;top:741px;width:107px;height:36px"></div>
<svg class="a" style="left:1011px;top:745px" width="32" height="30" viewBox="0 0 32 30"><rect x="1.200" y="13.200" width="20.500" height="15.500" fill="#dcdcdc" stroke="#6aaa14" stroke-width="2.400"/><path d="M10 17h10v6" fill="none" stroke="#7d8590" stroke-width="2.600"/><path d="M9 5h11V0.500l11 8.500-11 8.500V14H9z" fill="#ffc61a" stroke="#4f4f55" stroke-width="1.800" stroke-linejoin="miter"/></svg>
<svg class="a" style="left:1082px;top:748px" width="60" height="15" viewBox="0 0 60 15"><ellipse cx="9.8" cy="7.500" rx="9" ry="6.300" fill="#ececec" stroke="#4e4e4e" stroke-width="1.700"/><ellipse cx="29.0" cy="7.500" rx="9" ry="6.300" fill="#ececec" stroke="#4e4e4e" stroke-width="1.700"/><ellipse cx="48.2" cy="7.500" rx="9" ry="6.300" fill="#ececec" stroke="#4e4e4e" stroke-width="1.700"/></svg>
<div class="selc" style="left:45px;top:778px;width:46px;height:37px"></div>
<div class="a" style="left:92px;top:778px;width:269px;height:36px;background:#fff"></div>
<div class="a" style="left:362px;top:778px;width:89px;height:36px;background:#fff"></div>
<div class="a" style="left:452px;top:778px;width:71px;height:36px;background:#fff"></div>
<div class="a" style="left:524px;top:778px;width:179px;height:36px;background:#fff"></div>
<div class="a" style="left:704px;top:778px;width:107px;height:36px;background:#dfeaf5"></div>
<div class="a" style="left:812px;top:778px;width:161px;height:36px;background:#fff"></div>
<div class="a" style="left:974px;top:778px;width:107px;height:36px;background:#fff"></div>
<div class="a" style="left:1082px;top:778px;width:107px;height:36px;background:#dfeaf5"></div>
<div class="a" style="left:1190px;top:778px;width:233px;height:36px;background:#fff"></div>
<div class="a" style="left:1424px;top:778px;width:71px;height:36px;background:#fff"></div>
<div class="a" style="left:1496px;top:778px;width:89px;height:36px;background:#fff"></div>
<div class="a" style="left:1586px;top:778px;width:557px;height:36px;background:#dfeaf5"></div>
<div class="t" style="left:93.5px;top:776.5px"><span class="sx" style="transform:scaleX(0.9111)">SU53</span></div>
<div class="t r" style="left:362px;width:85.5px;top:776.5px"><span class="sx" style="transform-origin:100% 50%;transform:scaleX(0.981)">60</span></div>
<div class="t r" style="left:704px;width:103.5px;top:776.5px"><span class="sx" style="transform-origin:100% 50%;transform:scaleX(0.981)">900</span></div>
<div class="t" style="left:1587px;top:776.5px"><span class="sx" style="transform:scaleX(0.9517)">BPM,Security</span></div>
<div class="cb" style="left:601px;top:783px"></div>
<div class="cb" style="left:880px;top:783px"></div>
<div class="cb" style="left:1528px;top:783px"></div>
<svg class="a" style="left:1528px;top:783px" width="27" height="27" viewBox="0 0 27 27"><path d="M7.2 12.2L12.4 20.3 19.9 5.6" fill="none" stroke="#27274b" stroke-width="3.7" stroke-linejoin="miter"/></svg>
<div class="sbtn" style="left:974px;top:778px;width:107px;height:36px"></div>
<svg class="a" style="left:1011px;top:782px" width="32" height="30" viewBox="0 0 32 30"><rect x="1.200" y="13.200" width="20.500" height="15.500" fill="#dcdcdc" stroke="#6aaa14" stroke-width="2.400"/><path d="M10 17h10v6" fill="none" stroke="#7d8590" stroke-width="2.600"/><path d="M9 5h11V0.500l11 8.500-11 8.500V14H9z" fill="#ffc61a" stroke="#4f4f55" stroke-width="1.800" stroke-linejoin="miter"/></svg>
<svg class="a" style="left:1082px;top:785px" width="60" height="15" viewBox="0 0 60 15"><ellipse cx="9.8" cy="7.500" rx="9" ry="6.300" fill="#ececec" stroke="#4e4e4e" stroke-width="1.700"/><ellipse cx="29.0" cy="7.500" rx="9" ry="6.300" fill="#ececec" stroke="#4e4e4e" stroke-width="1.700"/><ellipse cx="48.2" cy="7.500" rx="9" ry="6.300" fill="#ececec" stroke="#4e4e4e" stroke-width="1.700"/></svg>
<div class="selc" style="left:45px;top:815px;width:46px;height:37px"></div>
<div class="a" style="left:92px;top:815px;width:269px;height:36px;background:#fff"></div>
<div class="a" style="left:362px;top:815px;width:89px;height:36px;background:#fff"></div>
<div class="a" style="left:452px;top:815px;width:71px;height:36px;background:#fff"></div>
<div class="a" style="left:524px;top:815px;width:179px;height:36px;background:#fff"></div>
<div class="a" style="left:704px;top:815px;width:107px;height:36px;background:#dfeaf5"></div>
<div class="a" style="left:812px;top:815px;width:161px;height:36px;background:#fff"></div>
<div class="a" style="left:974px;top:815px;width:107px;height:36px;background:#fff"></div>
<div class="a" style="left:1082px;top:815px;width:107px;height:36px;background:#dfeaf5"></div>
<div class="a" style="left:1190px;top:815px;width:233px;height:36px;background:#fff"></div>
<div class="a" style="left:1424px;top:815px;width:71px;height:36px;background:#fff"></div>
<div class="a" style="left:1496px;top:815px;width:89px;height:36px;background:#fff"></div>
<div class="a" style="left:1586px;top:815px;width:557px;height:36px;background:#dfeaf5"></div>
<div class="t" style="left:93.5px;top:813.5px"><span class="sx" style="transform:scaleX(0.9566)">SUIM</span></div>
<div class="t r" style="left:362px;width:85.5px;top:813.5px"><span class="sx" style="transform-origin:100% 50%;transform:scaleX(0.981)">3600</span></div>
<div class="t r" style="left:704px;width:103.5px;top:813.5px"><span class="sx" style="transform-origin:100% 50%;transform:scaleX(0.981)">54000</span></div>
<div class="t" style="left:1587px;top:813.5px"><span class="sx" style="transform:scaleX(1.0025)">ITSI,Security</span></div>
<div class="cb" style="left:601px;top:820px"></div>
<div class="cb" style="left:880px;top:820px"></div>
<div class="cb" style="left:1528px;top:820px"></div>
<svg class="a" style="left:1528px;top:820px" width="27" height="27" viewBox="0 0 27 27"><path d="M7.2 12.2L12.4 20.3 19.9 5.6" fill="none" stroke="#27274b" stroke-width="3.7" stroke-linejoin="miter"/></svg>
<div class="sbtn" style="left:974px;top:815px;width:107px;height:36px"></div>
<svg class="a" style="left:1011px;top:819px" width="32" height="30" viewBox="0 0 32 30"><rect x="1.200" y="13.200" width="20.500" height="15.500" fill="#dcdcdc" stroke="#6aaa14" stroke-width="2.400"/><path d="M10 17h10v6" fill="none" stroke="#7d8590" stroke-width="2.600"/><path d="M9 5h11V0.500l11 8.500-11 8.500V14H9z" fill="#ffc61a" stroke="#4f4f55" stroke-width="1.800" stroke-linejoin="miter"/></svg>
<svg class="a" style="left:1082px;top:822px" width="60" height="15" viewBox="0 0 60 15"><ellipse cx="9.8" cy="7.500" rx="9" ry="6.300" fill="#ececec" stroke="#4e4e4e" stroke-width="1.700"/><ellipse cx="29.0" cy="7.500" rx="9" ry="6.300" fill="#ececec" stroke="#4e4e4e" stroke-width="1.700"/><ellipse cx="48.2" cy="7.500" rx="9" ry="6.300" fill="#ececec" stroke="#4e4e4e" stroke-width="1.700"/></svg>
<div class="selc" style="left:45px;top:852px;width:46px;height:37px"></div>
<div class="a" style="left:92px;top:852px;width:269px;height:36px;background:#fff"></div>
<div class="a" style="left:362px;top:852px;width:89px;height:36px;background:#fff"></div>
<div class="a" style="left:452px;top:852px;width:71px;height:36px;background:#fff"></div>
<div class="a" style="left:524px;top:852px;width:179px;height:36px;background:#fff"></div>
<div class="a" style="left:704px;top:852px;width:107px;height:36px;background:#dfeaf5"></div>
<div class="a" style="left:812px;top:852px;width:161px;height:36px;background:#fff"></div>
<div class="a" style="left:974px;top:852px;width:107px;height:36px;background:#fff"></div>
<div class="a" style="left:1082px;top:852px;width:107px;height:36px;background:#dfeaf5"></div>
<div class="a" style="left:1190px;top:852px;width:233px;height:36px;background:#fff"></div>
<div class="a" style="left:1424px;top:852px;width:71px;height:36px;background:#fff"></div>
<div class="a" style="left:1496px;top:852px;width:89px;height:36px;background:#fff"></div>
<div class="a" style="left:1586px;top:852px;width:557px;height:36px;background:#dfeaf5"></div>
<div class="t" style="left:93.5px;top:850.5px"><span class="sx" style="transform:scaleX(0.8853)">SWEQUEUE</span></div>
<div class="t r" style="left:362px;width:85.5px;top:850.5px"><span class="sx" style="transform-origin:100% 50%;transform:scaleX(0.981)">300</span></div>
<div class="t r" style="left:704px;width:103.5px;top:850.5px"><span class="sx" style="transform-origin:100% 50%;transform:scaleX(0.981)">4500</span></div>
<div class="t" style="left:1587px;top:850.5px"><span class="sx" style="transform:scaleX(0.9842)">Performance</span></div>
<div class="cb" style="left:601px;top:857px"></div>
<div class="cb" style="left:880px;top:857px"></div>
<div class="cb" style="left:1528px;top:857px"></div>
<div class="sbtn" style="left:974px;top:852px;width:107px;height:36px"></div>
<svg class="a" style="left:1011px;top:856px" width="32" height="30" viewBox="0 0 32 30"><rect x="1.200" y="13.200" width="20.500" height="15.500" fill="#dcdcdc" stroke="#6aaa14" stroke-width="2.400"/><path d="M10 17h10v6" fill="none" stroke="#7d8590" stroke-width="2.600"/><path d="M9 5h11V0.500l11 8.500-11 8.500V14H9z" fill="#ffc61a" stroke="#4f4f55" stroke-width="1.800" stroke-linejoin="miter"/></svg>
<svg class="a" style="left:1082px;top:859px" width="60" height="15" viewBox="0 0 60 15"><ellipse cx="9.8" cy="7.500" rx="9" ry="6.300" fill="#ececec" stroke="#4e4e4e" stroke-width="1.700"/><ellipse cx="29.0" cy="7.500" rx="9" ry="6.300" fill="#ececec" stroke="#4e4e4e" stroke-width="1.700"/><ellipse cx="48.2" cy="7.500" rx="9" ry="6.300" fill="#ececec" stroke="#4e4e4e" stroke-width="1.700"/></svg>
<div class="selc" style="left:45px;top:889px;width:46px;height:37px"></div>
<div class="a" style="left:92px;top:889px;width:269px;height:36px;background:#fff"></div>
<div class="a" style="left:362px;top:889px;width:89px;height:36px;background:#fff"></div>
<div class="a" style="left:452px;top:889px;width:71px;height:36px;background:#fff"></div>
<div class="a" style="left:524px;top:889px;width:179px;height:36px;background:#fff"></div>
<div class="a" style="left:704px;top:889px;width:107px;height:36px;background:#dfeaf5"></div>
<div class="a" style="left:812px;top:889px;width:161px;height:36px;background:#fff"></div>
<div class="a" style="left:974px;top:889px;width:107px;height:36px;background:#fff"></div>
<div class="a" style="left:1082px;top:889px;width:107px;height:36px;background:#dfeaf5"></div>
<div class="a" style="left:1190px;top:889px;width:233px;height:36px;background:#fff"></div>
<div class="a" style="left:1424px;top:889px;width:71px;height:36px;background:#fff"></div>
<div class="a" style="left:1496px;top:889px;width:89px;height:36px;background:#fff"></div>
<div class="a" style="left:1586px;top:889px;width:557px;height:36px;background:#dfeaf5"></div>
<div class="t" style="left:93.5px;top:887.5px"><span class="sx" style="transform:scaleX(0.9644)">SWI1</span></div>
<div class="t r" style="left:362px;width:85.5px;top:887.5px"><span class="sx" style="transform-origin:100% 50%;transform:scaleX(0.981)">300</span></div>
<div class="t r" style="left:704px;width:103.5px;top:887.5px"><span class="sx" style="transform-origin:100% 50%;transform:scaleX(0.981)">4500</span></div>
<div class="t" style="left:1587px;top:887.5px"><span class="sx" style="transform:scaleX(0.9842)">Performance</span></div>
<div class="cb" style="left:601px;top:894px"></div>
<div class="cb" style="left:880px;top:894px"></div>
<div class="cb" style="left:1528px;top:894px"></div>
<div class="sbtn" style="left:974px;top:889px;width:107px;height:36px"></div>
<svg class="a" style="left:1011px;top:893px" width="32" height="30" viewBox="0 0 32 30"><rect x="1.200" y="13.200" width="20.500" height="15.500" fill="#dcdcdc" stroke="#6aaa14" stroke-width="2.400"/><path d="M10 17h10v6" fill="none" stroke="#7d8590" stroke-width="2.600"/><path d="M9 5h11V0.500l11 8.500-11 8.500V14H9z" fill="#ffc61a" stroke="#4f4f55" stroke-width="1.800" stroke-linejoin="miter"/></svg>
<svg class="a" style="left:1082px;top:896px" width="60" height="15" viewBox="0 0 60 15"><ellipse cx="9.8" cy="7.500" rx="9" ry="6.300" fill="#ececec" stroke="#4e4e4e" stroke-width="1.700"/><ellipse cx="29.0" cy="7.500" rx="9" ry="6.300" fill="#ececec" stroke="#4e4e4e" stroke-width="1.700"/><ellipse cx="48.2" cy="7.500" rx="9" ry="6.300" fill="#ececec" stroke="#4e4e4e" stroke-width="1.700"/></svg>
<div class="selc" style="left:45px;top:926px;width:46px;height:37px"></div>
<div class="a" style="left:92px;top:926px;width:269px;height:36px;background:#fff"></div>
<div class="a" style="left:362px;top:926px;width:89px;height:36px;background:#fff"></div>
<div class="a" style="left:452px;top:926px;width:71px;height:36px;background:#fff"></div>
<div class="a" style="left:524px;top:926px;width:179px;height:36px;background:#fff"></div>
<div class="a" style="left:704px;top:926px;width:107px;height:36px;background:#dfeaf5"></div>
<div class="a" style="left:812px;top:926px;width:161px;height:36px;background:#fff"></div>
<div class="a" style="left:974px;top:926px;width:107px;height:36px;background:#fff"></div>
<div class="a" style="left:1082px;top:926px;width:107px;height:36px;background:#dfeaf5"></div>
<div class="a" style="left:1190px;top:926px;width:233px;height:36px;background:#fff"></div>
<div class="a" style="left:1424px;top:926px;width:71px;height:36px;background:#fff"></div>
<div class="a" style="left:1496px;top:926px;width:89px;height:36px;background:#fff"></div>
<div class="a" style="left:1586px;top:926px;width:557px;height:36px;background:#dfeaf5"></div>
<div class="t" style="left:93.5px;top:924.5px"><span class="sx" style="transform:scaleX(0.9363)">SWI1_LOG</span></div>
<div class="t r" style="left:362px;width:85.5px;top:924.5px"><span class="sx" style="transform-origin:100% 50%;transform:scaleX(0.981)">300</span></div>
<div class="t r" style="left:704px;width:103.5px;top:924.5px"><span class="sx" style="transform-origin:100% 50%;transform:scaleX(0.981)">4500</span></div>
<div class="t" style="left:1587px;top:924.5px"><span class="sx" style="transform:scaleX(0.9842)">Performance</span></div>
<div class="cb" style="left:601px;top:931px"></div>
<div class="cb" style="left:880px;top:931px"></div>
<div class="cb" style="left:1528px;top:931px"></div>
<svg class="a" style="left:1528px;top:931px" width="27" height="27" viewBox="0 0 27 27"><path d="M7.2 12.2L12.4 20.3 19.9 5.6" fill="none" stroke="#27274b" stroke-width="3.7" stroke-linejoin="miter"/></svg>
<div class="sbtn" style="left:974px;top:926px;width:107px;height:36px"></div>
<svg class="a" style="left:1011px;top:930px" width="32" height="30" viewBox="0 0 32 30"><rect x="1.200" y="13.200" width="20.500" height="15.500" fill="#dcdcdc" stroke="#6aaa14" stroke-width="2.400"/><path d="M10 17h10v6" fill="none" stroke="#7d8590" stroke-width="2.600"/><path d="M9 5h11V0.500l11 8.500-11 8.500V14H9z" fill="#ffc61a" stroke="#4f4f55" stroke-width="1.800" stroke-linejoin="miter"/></svg>
<svg class="a" style="left:1082px;top:933px" width="60" height="15" viewBox="0 0 60 15"><ellipse cx="9.8" cy="7.500" rx="9" ry="6.300" fill="#ececec" stroke="#4e4e4e" stroke-width="1.700"/><ellipse cx="29.0" cy="7.500" rx="9" ry="6.300" fill="#ececec" stroke="#4e4e4e" stroke-width="1.700"/><ellipse cx="48.2" cy="7.500" rx="9" ry="6.300" fill="#ececec" stroke="#4e4e4e" stroke-width="1.700"/></svg>
<div class="selc" style="left:45px;top:963px;width:46px;height:37px"></div>
<div class="a" style="left:92px;top:963px;width:269px;height:36px;background:#fff"></div>
<div class="a" style="left:362px;top:963px;width:89px;height:36px;background:#fff"></div>
<div class="a" style="left:452px;top:963px;width:71px;height:36px;background:#fff"></div>
<div class="a" style="left:524px;top:963px;width:179px;height:36px;background:#fff"></div>
<div class="a" style="left:704px;top:963px;width:107px;height:36px;background:#dfeaf5"></div>
<div class="a" style="left:812px;top:963px;width:161px;height:36px;background:#fff"></div>
<div class="a" style="left:974px;top:963px;width:107px;height:36px;background:#fff"></div>
<div class="a" style="left:1082px;top:963px;width:107px;height:36px;background:#dfeaf5"></div>
<div class="a" style="left:1190px;top:963px;width:233px;height:36px;background:#fff"></div>
<div class="a" style="left:1424px;top:963px;width:71px;height:36px;background:#fff"></div>
<div class="a" style="left:1496px;top:963px;width:89px;height:36px;background:#fff"></div>
<div class="a" style="left:1586px;top:963px;width:557px;height:36px;background:#dfeaf5"></div>
<div class="t" style="left:93.5px;top:961.5px"><span class="sx" style="transform:scaleX(0.8827)">SWPC</span></div>
<div class="t r" style="left:362px;width:85.5px;top:961.5px"><span class="sx" style="transform-origin:100% 50%;transform:scaleX(0.981)">3600</span></div>
<div class="t r" style="left:704px;width:103.5px;top:961.5px"><span class="sx" style="transform-origin:100% 50%;transform:scaleX(0.981)">54000</span></div>
<div class="t" style="left:1587px;top:961.5px"><span class="sx" style="transform:scaleX(0.9842)">Performance</span></div>
<div class="cb" style="left:601px;top:968px"></div>
<div class="cb" style="left:880px;top:968px"></div>
<div class="cb" style="left:1528px;top:968px"></div>
<svg class="a" style="left:1528px;top:968px" width="27" height="27" viewBox="0 0 27 27"><path d="M7.2 12.2L12.4 20.3 19.9 5.6" fill="none" stroke="#27274b" stroke-width="3.7" stroke-linejoin="miter"/></svg>
<div class="sbtn" style="left:974px;top:963px;width:107px;height:36px"></div>
<svg class="a" style="left:1011px;top:967px" width="32" height="30" viewBox="0 0 32 30"><rect x="1.200" y="13.200" width="20.500" height="15.500" fill="#dcdcdc" stroke="#6aaa14" stroke-width="2.400"/><path d="M10 17h10v6" fill="none" stroke="#7d8590" stroke-width="2.600"/><path d="M9 5h11V0.500l11 8.500-11 8.500V14H9z" fill="#ffc61a" stroke="#4f4f55" stroke-width="1.800" stroke-linejoin="miter"/></svg>
<svg class="a" style="left:1082px;top:970px" width="60" height="15" viewBox="0 0 60 15"><ellipse cx="9.8" cy="7.500" rx="9" ry="6.300" fill="#ececec" stroke="#4e4e4e" stroke-width="1.700"/><ellipse cx="29.0" cy="7.500" rx="9" ry="6.300" fill="#ececec" stroke="#4e4e4e" stroke-width="1.700"/><ellipse cx="48.2" cy="7.500" rx="9" ry="6.300" fill="#ececec" stroke="#4e4e4e" stroke-width="1.700"/></svg>
<div class="selc" style="left:45px;top:1000px;width:46px;height:37px"></div>
<div class="a" style="left:92px;top:1000px;width:269px;height:36px;background:#fff"></div>
<div class="a" style="left:362px;top:1000px;width:89px;height:36px;background:#fff"></div>
<div class="a" style="left:452px;top:1000px;width:71px;height:36px;background:#fff"></div>
<div class="a" style="left:524px;top:1000px;width:179px;height:36px;background:#fff"></div>
<div class="a" style="left:704px;top:1000px;width:107px;height:36px;background:#dfeaf5"></div>
<div class="a" style="left:812px;top:1000px;width:161px;height:36px;background:#fff"></div>
<div class="a" style="left:974px;top:1000px;width:107px;height:36px;background:#fff"></div>
<div class="a" style="left:1082px;top:1000px;width:107px;height:36px;background:#dfeaf5"></div>
<div class="a" style="left:1190px;top:1000px;width:233px;height:36px;background:#fff"></div>
<div class="a" style="left:1424px;top:1000px;width:71px;height:36px;background:#fff"></div>
<div class="a" style="left:1496px;top:1000px;width:89px;height:36px;background:#fff"></div>
<div class="a" style="left:1586px;top:1000px;width:557px;height:36px;background:#dfeaf5"></div>
<div class="t" style="left:93.5px;top:998.5px"><span class="sx" style="transform:scaleX(0.876)">SWPR</span></div>
<div class="t r" style="left:362px;width:85.5px;top:998.5px"><span class="sx" style="transform-origin:100% 50%;transform:scaleX(0.981)">3600</span></div>
<div class="t r" style="left:704px;width:103.5px;top:998.5px"><span class="sx" style="transform-origin:100% 50%;transform:scaleX(0.981)">54000</span></div>
<div class="t" style="left:1587px;top:998.5px"><span class="sx" style="transform:scaleX(0.9842)">Performance</span></div>
<div class="cb" style="left:601px;top:1005px"></div>
<div class="cb" style="left:880px;top:1005px"></div>
<div class="cb" style="left:1528px;top:1005px"></div>
<svg class="a" style="left:1528px;top:1005px" width="27" height="27" viewBox="0 0 27 27"><path d="M7.2 12.2L12.4 20.3 19.9 5.6" fill="none" stroke="#27274b" stroke-width="3.7" stroke-linejoin="miter"/></svg>
<div class="sbtn" style="left:974px;top:1000px;width:107px;height:36px"></div>
<svg class="a" style="left:1011px;top:1004px" width="32" height="30" viewBox="0 0 32 30"><rect x="1.200" y="13.200" width="20.500" height="15.500" fill="#dcdcdc" stroke="#6aaa14" stroke-width="2.400"/><path d="M10 17h10v6" fill="none" stroke="#7d8590" stroke-width="2.600"/><path d="M9 5h11V0.500l11 8.500-11 8.500V14H9z" fill="#ffc61a" stroke="#4f4f55" stroke-width="1.800" stroke-linejoin="miter"/></svg>
<svg class="a" style="left:1082px;top:1007px" width="60" height="15" viewBox="0 0 60 15"><ellipse cx="9.8" cy="7.500" rx="9" ry="6.300" fill="#ececec" stroke="#4e4e4e" stroke-width="1.700"/><ellipse cx="29.0" cy="7.500" rx="9" ry="6.300" fill="#ececec" stroke="#4e4e4e" stroke-width="1.700"/><ellipse cx="48.2" cy="7.500" rx="9" ry="6.300" fill="#ececec" stroke="#4e4e4e" stroke-width="1.700"/></svg>
<div class="selc" style="left:45px;top:1037px;width:46px;height:37px"></div>
<div class="a" style="left:92px;top:1037px;width:269px;height:36px;background:#fff"></div>
<div class="a" style="left:362px;top:1037px;width:89px;height:36px;background:#fff"></div>
<div class="a" style="left:452px;top:1037px;width:71px;height:36px;background:#fff"></div>
<div class="a" style="left:524px;top:1037px;width:179px;height:36px;background:#fff"></div>
<div class="a" style="left:704px;top:1037px;width:107px;height:36px;background:#dfeaf5"></div>
<div class="a" style="left:812px;top:1037px;width:161px;height:36px;background:#fff"></div>
<div class="a" style="left:974px;top:1037px;width:107px;height:36px;background:#fff"></div>
<div class="a" style="left:1082px;top:1037px;width:107px;height:36px;background:#dfeaf5"></div>
<div class="a" style="left:1190px;top:1037px;width:233px;height:36px;background:#fff"></div>
<div class="a" style="left:1424px;top:1037px;width:71px;height:36px;background:#fff"></div>
<div class="a" style="left:1496px;top:1037px;width:89px;height:36px;background:#fff"></div>
<div class="a" style="left:1586px;top:1037px;width:557px;height:36px;background:#dfeaf5"></div>
<div class="t" style="left:93.5px;top:1035.5px"><span class="sx" style="transform:scaleX(0.9252)">SXMB_MONI</span></div>
<div class="t r" style="left:362px;width:85.5px;top:1035.5px"><span class="sx" style="transform-origin:100% 50%;transform:scaleX(0.981)">300</span></div>
<div class="t r" style="left:704px;width:103.5px;top:1035.5px"><span class="sx" style="transform-origin:100% 50%;transform:scaleX(0.981)">4500</span></div>
<div class="t" style="left:1587px;top:1035.5px"><span class="sx" style="transform:scaleX(0.9573)">BPM,Performance</span></div>
<div class="cb" style="left:601px;top:1042px"></div>
<div class="cb" style="left:880px;top:1042px"></div>
<div class="cb" style="left:1528px;top:1042px"></div>
<div class="sbtn" style="left:974px;top:1037px;width:107px;height:36px"></div>
<svg class="a" style="left:1011px;top:1041px" width="32" height="30" viewBox="0 0 32 30"><rect x="1.200" y="13.200" width="20.500" height="15.500" fill="#dcdcdc" stroke="#6aaa14" stroke-width="2.400"/><path d="M10 17h10v6" fill="none" stroke="#7d8590" stroke-width="2.600"/><path d="M9 5h11V0.500l11 8.500-11 8.500V14H9z" fill="#ffc61a" stroke="#4f4f55" stroke-width="1.800" stroke-linejoin="miter"/></svg>
<svg class="a" style="left:1082px;top:1044px" width="60" height="15" viewBox="0 0 60 15"><ellipse cx="9.8" cy="7.500" rx="9" ry="6.300" fill="#ececec" stroke="#4e4e4e" stroke-width="1.700"/><ellipse cx="29.0" cy="7.500" rx="9" ry="6.300" fill="#ececec" stroke="#4e4e4e" stroke-width="1.700"/><ellipse cx="48.2" cy="7.500" rx="9" ry="6.300" fill="#ececec" stroke="#4e4e4e" stroke-width="1.700"/></svg>
<div class="selc" style="left:45px;top:1074px;width:46px;height:37px"></div>
<div class="a" style="left:92px;top:1074px;width:269px;height:36px;background:#fff"></div>
<div class="a" style="left:362px;top:1074px;width:89px;height:36px;background:#fff"></div>
<div class="a" style="left:452px;top:1074px;width:71px;height:36px;background:#fff"></div>
<div class="a" style="left:524px;top:1074px;width:179px;height:36px;background:#fff"></div>
<div class="a" style="left:704px;top:1074px;width:107px;height:36px;background:#dfeaf5"></div>
<div class="a" style="left:812px;top:1074px;width:161px;height:36px;background:#fff"></div>
<div class="a" style="left:974px;top:1074px;width:107px;height:36px;background:#fff"></div>
<div class="a" style="left:1082px;top:1074px;width:107px;height:36px;background:#dfeaf5"></div>
<div class="a" style="left:1190px;top:1074px;width:233px;height:36px;background:#fff"></div>
<div class="a" style="left:1424px;top:1074px;width:71px;height:36px;background:#fff"></div>
<div class="a" style="left:1496px;top:1074px;width:89px;height:36px;background:#fff"></div>
<div class="a" style="left:1586px;top:1074px;width:557px;height:36px;background:#dfeaf5"></div>
<div class="t" style="left:93.5px;top:1072.5px"><span class="sx" style="transform:scaleX(0.9029)">SYSTEM_STATUS</span></div>
<div class="t r" style="left:362px;width:85.5px;top:1072.5px"><span class="sx" style="transform-origin:100% 50%;transform:scaleX(0.981)">86400</span></div>
<div class="t r" style="left:704px;width:103.5px;top:1072.5px"><span class="sx" style="transform-origin:100% 50%;transform:scaleX(0.981)">1296000</span></div>
<div class="t" style="left:1587px;top:1072.5px"><span class="sx" style="transform:scaleX(0.9842)">Performance</span></div>
<div class="cb" style="left:601px;top:1079px"></div>
<div class="cb" style="left:880px;top:1079px"></div>
<div class="cb" style="left:1528px;top:1079px"></div>
<svg class="a" style="left:1528px;top:1079px" width="27" height="27" viewBox="0 0 27 27"><path d="M7.2 12.2L12.4 20.3 19.9 5.6" fill="none" stroke="#27274b" stroke-width="3.7" stroke-linejoin="miter"/></svg>
<div class="sbtn" style="left:974px;top:1074px;width:107px;height:36px"></div>
<svg class="a" style="left:1011px;top:1078px" width="32" height="30" viewBox="0 0 32 30"><rect x="1.200" y="13.200" width="20.500" height="15.500" fill="#dcdcdc" stroke="#6aaa14" stroke-width="2.400"/><path d="M10 17h10v6" fill="none" stroke="#7d8590" stroke-width="2.600"/><path d="M9 5h11V0.500l11 8.500-11 8.500V14H9z" fill="#ffc61a" stroke="#4f4f55" stroke-width="1.800" stroke-linejoin="miter"/></svg>
<svg class="a" style="left:1082px;top:1081px" width="60" height="15" viewBox="0 0 60 15"><ellipse cx="9.8" cy="7.500" rx="9" ry="6.300" fill="#ececec" stroke="#4e4e4e" stroke-width="1.700"/><ellipse cx="29.0" cy="7.500" rx="9" ry="6.300" fill="#ececec" stroke="#4e4e4e" stroke-width="1.700"/><ellipse cx="48.2" cy="7.500" rx="9" ry="6.300" fill="#ececec" stroke="#4e4e4e" stroke-width="1.700"/></svg>
<div class="selc" style="left:45px;top:1111px;width:46px;height:37px"></div>
<div class="a" style="left:92px;top:1111px;width:269px;height:36px;background:#fff"></div>
<div class="a" style="left:362px;top:1111px;width:89px;height:36px;background:#fff"></div>
<div class="a" style="left:452px;top:1111px;width:71px;height:36px;background:#fff"></div>
<div class="a" style="left:524px;top:1111px;width:179px;height:36px;background:#fff"></div>
<div class="a" style="left:704px;top:1111px;width:107px;height:36px;background:#dfeaf5"></div>
<div class="a" style="left:812px;top:1111px;width:161px;height:36px;background:#fff"></div>
<div class="a" style="left:974px;top:1111px;width:107px;height:36px;background:#fff"></div>
<div class="a" style="left:1082px;top:1111px;width:107px;height:36px;background:#dfeaf5"></div>
<div class="a" style="left:1190px;top:1111px;width:233px;height:36px;background:#fff"></div>
<div class="a" style="left:1424px;top:1111px;width:71px;height:36px;background:#fff"></div>
<div class="a" style="left:1496px;top:1111px;width:89px;height:36px;background:#fff"></div>
<div class="a" style="left:1586px;top:1111px;width:557px;height:36px;background:#dfeaf5"></div>
<div class="t" style="left:93.5px;top:1109.5px"><span class="sx" style="transform:scaleX(0.9172)">TABLE_COUNT</span></div>
<div class="t r" style="left:362px;width:85.5px;top:1109.5px"><span class="sx" style="transform-origin:100% 50%;transform:scaleX(0.981)">3600</span></div>
<div class="t r" style="left:704px;width:103.5px;top:1109.5px"><span class="sx" style="transform-origin:100% 50%;transform:scaleX(0.981)">54000</span></div>
<div class="t" style="left:1587px;top:1109.5px"><span class="sx" style="transform:scaleX(0.9135)">BPM</span></div>
<div class="cb" style="left:601px;top:1116px"></div>
<div class="cb" style="left:880px;top:1116px"></div>
<div class="cb" style="left:1528px;top:1116px"></div>
<svg class="a" style="left:1528px;top:1116px" width="27" height="27" viewBox="0 0 27 27"><path d="M7.2 12.2L12.4 20.3 19.9 5.6" fill="none" stroke="#27274b" stroke-width="3.7" stroke-linejoin="miter"/></svg>
<div class="sbtn" style="left:974px;top:1111px;width:107px;height:36px"></div>
<svg class="a" style="left:1011px;top:1115px" width="32" height="30" viewBox="0 0 32 30"><rect x="1.200" y="13.200" width="20.500" height="15.500" fill="#dcdcdc" stroke="#6aaa14" stroke-width="2.400"/><path d="M10 17h10v6" fill="none" stroke="#7d8590" stroke-width="2.600"/><path d="M9 5h11V0.500l11 8.500-11 8.500V14H9z" fill="#ffc61a" stroke="#4f4f55" stroke-width="1.800" stroke-linejoin="miter"/></svg>
<svg class="a" style="left:1082px;top:1118px" width="60" height="15" viewBox="0 0 60 15"><ellipse cx="9.8" cy="7.500" rx="9" ry="6.300" fill="#ececec" stroke="#4e4e4e" stroke-width="1.700"/><ellipse cx="29.0" cy="7.500" rx="9" ry="6.300" fill="#ececec" stroke="#4e4e4e" stroke-width="1.700"/><ellipse cx="48.2" cy="7.500" rx="9" ry="6.300" fill="#ececec" stroke="#4e4e4e" stroke-width="1.700"/></svg>
<div class="selc" style="left:45px;top:1148px;width:46px;height:37px"></div>
<div class="a" style="left:92px;top:1148px;width:269px;height:36px;background:#fcdc80"></div>
<div class="a" style="left:362px;top:1148px;width:89px;height:36px;background:#fcdc80"></div>
<div class="a" style="left:452px;top:1148px;width:71px;height:36px;background:#fcdc80"></div>
<div class="a" style="left:524px;top:1148px;width:179px;height:36px;background:#fcdc80"></div>
<div class="a" style="left:704px;top:1148px;width:107px;height:36px;background:#fcdc80"></div>
<div class="a" style="left:812px;top:1148px;width:161px;height:36px;background:#fcdc80"></div>
<div class="a" style="left:974px;top:1148px;width:107px;height:36px;background:#fcdc80"></div>
<div class="a" style="left:1082px;top:1148px;width:107px;height:36px;background:#fcdc80"></div>
<div class="a" style="left:1190px;top:1148px;width:233px;height:36px;background:#fcdc80"></div>
<div class="a" style="left:1424px;top:1148px;width:71px;height:36px;background:#fcdc80"></div>
<div class="a" style="left:1496px;top:1148px;width:89px;height:36px;background:#fcdc80"></div>
<div class="a" style="left:1586px;top:1148px;width:557px;height:36px;background:#fcdc80"></div>
<div class="t" style="left:93.5px;top:1146.5px"><span class="sx" style="transform:scaleX(0.9165)">TREAD</span></div>
<div class="t r" style="left:362px;width:85.5px;top:1146.5px"><span class="sx" style="transform-origin:100% 50%;transform:scaleX(0.981)">3600</span></div>
<div class="t r" style="left:704px;width:103.5px;top:1146.5px"><span class="sx" style="transform-origin:100% 50%;transform:scaleX(0.981)">54000</span></div>
<div class="cb" style="left:601px;top:1153px"></div>
<div class="cb" style="left:880px;top:1153px"></div>
<div class="cb" style="left:1528px;top:1153px;border-color:#2f6cb8;box-shadow:inset 0 0 0 1px #dfe8f5"></div>
<div class="sbtn" style="left:974px;top:1148px;width:107px;height:36px"></div>
<div class="selc" style="left:45px;top:1185px;width:46px;height:37px"></div>
<div class="a" style="left:92px;top:1185px;width:269px;height:36px;background:#fff"></div>
<div class="a" style="left:362px;top:1185px;width:89px;height:36px;background:#fff"></div>
<div class="a" style="left:452px;top:1185px;width:71px;height:36px;background:#fff"></div>
<div class="a" style="left:524px;top:1185px;width:179px;height:36px;background:#fff"></div>
<div class="a" style="left:704px;top:1185px;width:107px;height:36px;background:#dfeaf5"></div>
<div class="a" style="left:812px;top:1185px;width:161px;height:36px;background:#fff"></div>
<div class="a" style="left:974px;top:1185px;width:107px;height:36px;background:#fff"></div>
<div class="a" style="left:1082px;top:1185px;width:107px;height:36px;background:#dfeaf5"></div>
<div class="a" style="left:1190px;top:1185px;width:233px;height:36px;background:#fff"></div>
<div class="a" style="left:1424px;top:1185px;width:71px;height:36px;background:#fff"></div>
<div class="a" style="left:1496px;top:1185px;width:89px;height:36px;background:#fff"></div>
<div class="a" style="left:1586px;top:1185px;width:557px;height:36px;background:#dfeaf5"></div>
<div class="t" style="left:93.5px;top:1183.5px"><span class="sx" style="transform:scaleX(0.9243)">TREAD_DYN</span></div>
<div class="t r" style="left:362px;width:85.5px;top:1183.5px"><span class="sx" style="transform-origin:100% 50%;transform:scaleX(0.981)">3600</span></div>
<div class="t r" style="left:704px;width:103.5px;top:1183.5px"><span class="sx" style="transform-origin:100% 50%;transform:scaleX(0.981)">54000</span></div>
<div class="t" style="left:1587px;top:1183.5px"><span class="sx" style="transform:scaleX(0.9135)">BPM</span></div>
<div class="cb" style="left:601px;top:1190px"></div>
<div class="cb" style="left:880px;top:1190px"></div>
<div class="cb" style="left:1528px;top:1190px"></div>
<svg class="a" style="left:1528px;top:1190px" width="27" height="27" viewBox="0 0 27 27"><path d="M7.2 12.2L12.4 20.3 19.9 5.6" fill="none" stroke="#27274b" stroke-width="3.7" stroke-linejoin="miter"/></svg>
<div class="sbtn" style="left:974px;top:1185px;width:107px;height:36px"></div>
<svg class="a" style="left:1011px;top:1189px" width="32" height="30" viewBox="0 0 32 30"><rect x="1.200" y="13.200" width="20.500" height="15.500" fill="#dcdcdc" stroke="#6aaa14" stroke-width="2.400"/><path d="M10 17h10v6" fill="none" stroke="#7d8590" stroke-width="2.600"/><path d="M9 5h11V0.500l11 8.500-11 8.500V14H9z" fill="#ffc61a" stroke="#4f4f55" stroke-width="1.800" stroke-linejoin="miter"/></svg>
<svg class="a" style="left:1082px;top:1192px" width="60" height="15" viewBox="0 0 60 15"><ellipse cx="9.8" cy="7.500" rx="9" ry="6.300" fill="#ececec" stroke="#4e4e4e" stroke-width="1.700"/><ellipse cx="29.0" cy="7.500" rx="9" ry="6.300" fill="#ececec" stroke="#4e4e4e" stroke-width="1.700"/><ellipse cx="48.2" cy="7.500" rx="9" ry="6.300" fill="#ececec" stroke="#4e4e4e" stroke-width="1.700"/></svg>
<div class="selc" style="left:45px;top:1222px;width:46px;height:37px"></div>
<div class="a" style="left:92px;top:1222px;width:269px;height:36px;background:#fff"></div>
<div class="a" style="left:362px;top:1222px;width:89px;height:36px;background:#fff"></div>
<div class="a" style="left:452px;top:1222px;width:71px;height:36px;background:#fff"></div>
<div class="a" style="left:524px;top:1222px;width:179px;height:36px;background:#fff"></div>
<div class="a" style="left:704px;top:1222px;width:107px;height:36px;background:#dfeaf5"></div>
<div class="a" style="left:812px;top:1222px;width:161px;height:36px;background:#fff"></div>
<div class="a" style="left:974px;top:1222px;width:107px;height:36px;background:#fff"></div>
<div class="a" style="left:1082px;top:1222px;width:107px;height:36px;background:#dfeaf5"></div>
<div class="a" style="left:1190px;top:1222px;width:233px;height:36px;background:#fff"></div>
<div class="a" style="left:1424px;top:1222px;width:71px;height:36px;background:#fff"></div>
<div class="a" style="left:1496px;top:1222px;width:89px;height:36px;background:#fff"></div>
<div class="a" style="left:1586px;top:1222px;width:557px;height:36px;background:#dfeaf5"></div>
<div class="t" style="left:93.5px;top:1220.5px"><span class="sx" style="transform:scaleX(0.936)">USH02</span></div>
<div class="t r" style="left:362px;width:85.5px;top:1220.5px"><span class="sx" style="transform-origin:100% 50%;transform:scaleX(0.981)">3600</span></div>
<div class="t r" style="left:704px;width:103.5px;top:1220.5px"><span class="sx" style="transform-origin:100% 50%;transform:scaleX(0.981)">54000</span></div>
<div class="t" style="left:1587px;top:1220.5px"><span class="sx" style="transform:scaleX(0.9754)">Security</span></div>
<div class="cb" style="left:601px;top:1227px"></div>
<div class="cb" style="left:880px;top:1227px"></div>
<div class="cb" style="left:1528px;top:1227px"></div>
<svg class="a" style="left:1528px;top:1227px" width="27" height="27" viewBox="0 0 27 27"><path d="M7.2 12.2L12.4 20.3 19.9 5.6" fill="none" stroke="#27274b" stroke-width="3.7" stroke-linejoin="miter"/></svg>
<div class="sbtn" style="left:974px;top:1222px;width:107px;height:36px"></div>
<svg class="a" style="left:1011px;top:1226px" width="32" height="30" viewBox="0 0 32 30"><rect x="1.200" y="13.200" width="20.500" height="15.500" fill="#dcdcdc" stroke="#6aaa14" stroke-width="2.400"/><path d="M10 17h10v6" fill="none" stroke="#7d8590" stroke-width="2.600"/><path d="M9 5h11V0.500l11 8.500-11 8.500V14H9z" fill="#ffc61a" stroke="#4f4f55" stroke-width="1.800" stroke-linejoin="miter"/></svg>
<svg class="a" style="left:1082px;top:1229px" width="60" height="15" viewBox="0 0 60 15"><ellipse cx="9.8" cy="7.500" rx="9" ry="6.300" fill="#ececec" stroke="#4e4e4e" stroke-width="1.700"/><ellipse cx="29.0" cy="7.500" rx="9" ry="6.300" fill="#ececec" stroke="#4e4e4e" stroke-width="1.700"/><ellipse cx="48.2" cy="7.500" rx="9" ry="6.300" fill="#ececec" stroke="#4e4e4e" stroke-width="1.700"/></svg>
<div class="selc" style="left:45px;top:1259px;width:46px;height:37px"></div>
<div class="a" style="left:92px;top:1259px;width:269px;height:36px;background:#fff"></div>
<div class="a" style="left:362px;top:1259px;width:89px;height:36px;background:#fff"></div>
<div class="a" style="left:452px;top:1259px;width:71px;height:36px;background:#fff"></div>
<div class="a" style="left:524px;top:1259px;width:179px;height:36px;background:#fff"></div>
<div class="a" style="left:704px;top:1259px;width:107px;height:36px;background:#dfeaf5"></div>
<div class="a" style="left:812px;top:1259px;width:161px;height:36px;background:#fff"></div>
<div class="a" style="left:974px;top:1259px;width:107px;height:36px;background:#fff"></div>
<div class="a" style="left:1082px;top:1259px;width:107px;height:36px;background:#dfeaf5"></div>
<div class="a" style="left:1190px;top:1259px;width:233px;height:36px;background:#fff"></div>
<div class="a" style="left:1424px;top:1259px;width:71px;height:36px;background:#fff"></div>
<div class="a" style="left:1496px;top:1259px;width:89px;height:36px;background:#fff"></div>
<div class="a" style="left:1586px;top:1259px;width:557px;height:36px;background:#dfeaf5"></div>
<div class="t" style="left:93.5px;top:1257.5px"><span class="sx" style="transform:scaleX(0.9)">USR41BAK</span></div>
<div class="t r" style="left:362px;width:85.5px;top:1257.5px"><span class="sx" style="transform-origin:100% 50%;transform:scaleX(0.981)">120</span></div>
<div class="t r" style="left:704px;width:103.5px;top:1257.5px"><span class="sx" style="transform-origin:100% 50%;transform:scaleX(0.981)">1800</span></div>
<div class="t" style="left:1587px;top:1257.5px"><span class="sx" style="transform:scaleX(0.9842)">Performance</span></div>
<div class="cb" style="left:601px;top:1264px"></div>
<div class="cb" style="left:880px;top:1264px"></div>
<div class="cb" style="left:1528px;top:1264px"></div>
<svg class="a" style="left:1528px;top:1264px" width="27" height="27" viewBox="0 0 27 27"><path d="M7.2 12.2L12.4 20.3 19.9 5.6" fill="none" stroke="#27274b" stroke-width="3.7" stroke-linejoin="miter"/></svg>
<div class="sbtn" style="left:974px;top:1259px;width:107px;height:36px"></div>
<svg class="a" style="left:1011px;top:1263px" width="32" height="30" viewBox="0 0 32 30"><rect x="1.200" y="13.200" width="20.500" height="15.500" fill="#dcdcdc" stroke="#6aaa14" stroke-width="2.400"/><path d="M10 17h10v6" fill="none" stroke="#7d8590" stroke-width="2.600"/><path d="M9 5h11V0.500l11 8.500-11 8.500V14H9z" fill="#ffc61a" stroke="#4f4f55" stroke-width="1.800" stroke-linejoin="miter"/></svg>
<svg class="a" style="left:1082px;top:1266px" width="60" height="15" viewBox="0 0 60 15"><ellipse cx="9.8" cy="7.500" rx="9" ry="6.300" fill="#ececec" stroke="#4e4e4e" stroke-width="1.700"/><ellipse cx="29.0" cy="7.500" rx="9" ry="6.300" fill="#ececec" stroke="#4e4e4e" stroke-width="1.700"/><ellipse cx="48.2" cy="7.500" rx="9" ry="6.300" fill="#ececec" stroke="#4e4e4e" stroke-width="1.700"/></svg>
<div class="selc" style="left:45px;top:1296px;width:46px;height:37px"></div>
<div class="a" style="left:92px;top:1296px;width:269px;height:36px;background:#fff"></div>
<div class="a" style="left:362px;top:1296px;width:89px;height:36px;background:#fff"></div>
<div class="a" style="left:452px;top:1296px;width:71px;height:36px;background:#fff"></div>
<div class="a" style="left:524px;top:1296px;width:179px;height:36px;background:#fff"></div>
<div class="a" style="left:704px;top:1296px;width:107px;height:36px;background:#dfeaf5"></div>
<div class="a" style="left:812px;top:1296px;width:161px;height:36px;background:#fff"></div>
<div class="a" style="left:974px;top:1296px;width:107px;height:36px;background:#fff"></div>
<div class="a" style="left:1082px;top:1296px;width:107px;height:36px;background:#dfeaf5"></div>
<div class="a" style="left:1190px;top:1296px;width:233px;height:36px;background:#fff"></div>
<div class="a" style="left:1424px;top:1296px;width:71px;height:36px;background:#fff"></div>
<div class="a" style="left:1496px;top:1296px;width:89px;height:36px;background:#fff"></div>
<div class="a" style="left:1586px;top:1296px;width:557px;height:36px;background:#dfeaf5"></div>
<div class="t" style="left:93.5px;top:1294.5px"><span class="sx" style="transform:scaleX(0.9274)">WE02</span></div>
<div class="t r" style="left:362px;width:85.5px;top:1294.5px"><span class="sx" style="transform-origin:100% 50%;transform:scaleX(0.981)">60</span></div>
<div class="t r" style="left:704px;width:103.5px;top:1294.5px"><span class="sx" style="transform-origin:100% 50%;transform:scaleX(0.981)">900</span></div>
<div class="t" style="left:1587px;top:1294.5px"><span class="sx" style="transform:scaleX(0.9715)">BPM,ITSI</span></div>
<div class="cb" style="left:601px;top:1301px"></div>
<div class="cb" style="left:880px;top:1301px"></div>
<div class="cb" style="left:1528px;top:1301px"></div>
<svg class="a" style="left:1528px;top:1301px" width="27" height="27" viewBox="0 0 27 27"><path d="M7.2 12.2L12.4 20.3 19.9 5.6" fill="none" stroke="#27274b" stroke-width="3.7" stroke-linejoin="miter"/></svg>
<div class="sbtn" style="left:974px;top:1296px;width:107px;height:36px"></div>
<svg class="a" style="left:1011px;top:1300px" width="32" height="30" viewBox="0 0 32 30"><rect x="1.200" y="13.200" width="20.500" height="15.500" fill="#dcdcdc" stroke="#6aaa14" stroke-width="2.400"/><path d="M10 17h10v6" fill="none" stroke="#7d8590" stroke-width="2.600"/><path d="M9 5h11V0.500l11 8.500-11 8.500V14H9z" fill="#ffc61a" stroke="#4f4f55" stroke-width="1.800" stroke-linejoin="miter"/></svg>
<svg class="a" style="left:1082px;top:1303px" width="60" height="15" viewBox="0 0 60 15"><ellipse cx="9.8" cy="7.500" rx="9" ry="6.300" fill="#ececec" stroke="#4e4e4e" stroke-width="1.700"/><ellipse cx="29.0" cy="7.500" rx="9" ry="6.300" fill="#ececec" stroke="#4e4e4e" stroke-width="1.700"/><ellipse cx="48.2" cy="7.500" rx="9" ry="6.300" fill="#ececec" stroke="#4e4e4e" stroke-width="1.700"/></svg>
<div class="hl" style="left:92px;top:407px;width:2052px"></div>
<div class="hl" style="left:92px;top:444px;width:2052px"></div>
<div class="hl" style="left:92px;top:481px;width:2052px"></div>
<div class="hl" style="left:92px;top:518px;width:2052px"></div>
<div class="hl" style="left:92px;top:555px;width:2052px"></div>
<div class="hl" style="left:92px;top:592px;width:2052px"></div>
<div class="hl" style="left:92px;top:629px;width:2052px"></div>
<div class="hl" style="left:92px;top:666px;width:2052px"></div>
<div class="hl" style="left:92px;top:703px;width:2052px"></div>
<div class="hl" style="left:92px;top:740px;width:2052px"></div>
<div class="hl" style="left:92px;top:777px;width:2052px"></div>
<div class="hl" style="left:92px;top:814px;width:2052px"></div>
<div class="hl" style="left:92px;top:851px;width:2052px"></div>
<div class="hl" style="left:92px;top:888px;width:2052px"></div>
<div class="hl" style="left:92px;top:925px;width:2052px"></div>
<div class="hl" style="left:92px;top:962px;width:2052px"></div>
<div class="hl" style="left:92px;top:999px;width:2052px"></div>
<div class="hl" style="left:92px;top:1036px;width:2052px"></div>
<div class="hl" style="left:92px;top:1073px;width:2052px"></div>
<div class="hl" style="left:92px;top:1110px;width:2052px"></div>
<div class="hl" style="left:92px;top:1147px;width:2052px"></div>
<div class="hl" style="left:92px;top:1184px;width:2052px"></div>
<div class="hl" style="left:92px;top:1221px;width:2052px"></div>
<div class="hl" style="left:92px;top:1258px;width:2052px"></div>
<div class="hl" style="left:92px;top:1295px;width:2052px"></div>
<div class="hl" style="left:92px;top:1332px;width:2052px"></div>
<div class="vl" style="left:361px;top:371px;height:962px"></div>
<div class="vl" style="left:451px;top:371px;height:962px"></div>
<div class="vl" style="left:523px;top:371px;height:962px"></div>
<div class="vl" style="left:703px;top:371px;height:962px"></div>
<div class="vl" style="left:811px;top:371px;height:962px"></div>
<div class="vl" style="left:973px;top:371px;height:962px"></div>
<div class="vl" style="left:1081px;top:371px;height:962px"></div>
<div class="vl" style="left:1189px;top:371px;height:962px"></div>
<div class="vl" style="left:1423px;top:371px;height:962px"></div>
<div class="vl" style="left:1495px;top:371px;height:962px"></div>
<div class="vl" style="left:1585px;top:371px;height:962px"></div>
<div class="vl" style="left:2143px;top:371px;height:962px"></div>
<div class="a" style="left:92px;top:1148px;width:2052px;height:1px;background:#e57f14"></div>
<div class="a" style="left:92px;top:1184px;width:2052px;height:1px;background:#e57f14"></div>
<div class="a" style="left:45px;top:1147px;width:46px;height:38px;background:#b9c1cd"></div>
<svg class="a" style="left:0;top:0" width="2241" height="1400" viewBox="0 0 2241 1400"><path d="M51 1148H43V1156 M84 1148H92V1156 M51 1185H43V1177 M84 1185H92V1177" fill="none" stroke="#d8101c" stroke-width="2"/></svg>
<div class="a" style="left:2198px;top:371px;width:1px;height:962px;background:#b5c3d5"></div>
<div class="a" style="left:2201px;top:371px;width:35px;height:962px;background:#f9fbfd"></div>
<div class="a" style="left:2201px;top:371px;width:35px;height:35px;background:#f2f6fa;box-shadow:0 1px 0 #c6d6e8"></div>
<svg class="a" style="left:2210px;top:383px" width="17" height="10" viewBox="0 0 17 10"><path d="M8.200 0L16.400 9.500H0z" fill="#4a5a6c"/></svg>

<div class="a" style="left:2201px;top:407px;width:35px;height:36px;background:#f2f6fa;box-shadow:0 1px 0 #c6d6e8"></div>
<svg class="a" style="left:2210px;top:419px" width="17" height="10" viewBox="0 0 17 10"><path d="M8.200 9.500L16.400 0H0z" fill="#4a5a6c"/></svg>

<div class="a" style="left:2204px;top:1171px;width:30px;height:79px;box-sizing:border-box;border:1px solid #8d9db3;border-radius:2px;background:linear-gradient(90deg,#eaf0f7,#e3ebf4 80%,#d9e3ee);box-shadow:1px 1px 2px rgba(80,100,130,.35)"></div>
<svg class="a" style="left:2215px;top:1207px" width="8" height="9" viewBox="0 0 8 9"><path d="M1 1h1.500v1.500H1zM5 1h1.500v1.500H1zM1 4h1.500v1.500H1zM5 4h1.500v1.500H5zM1 7h1.500v1.500H1zM5 7h1.500v1.500H5z" fill="#9aa8bc"/></svg>

<div class="a" style="left:2201px;top:1260px;width:35px;height:1px;background:#c6d6e8"></div>
<div class="a" style="left:2201px;top:1261px;width:35px;height:35px;background:#f2f6fa;box-shadow:0 1px 0 #c6d6e8"></div>
<svg class="a" style="left:2210px;top:1272px" width="17" height="10" viewBox="0 0 17 10"><path d="M8.200 0L16.400 9.500H0z" fill="#4a5a6c"/></svg>

<div class="a" style="left:2201px;top:1297px;width:35px;height:36px;background:#f2f6fa;box-shadow:0 1px 0 #c6d6e8"></div>
<svg class="a" style="left:2210px;top:1308px" width="17" height="10" viewBox="0 0 17 10"><path d="M8.200 9.500L16.400 0H0z" fill="#4a5a6c"/></svg>

<div class="a" style="left:0;top:1337px;width:2241px;height:63px;background:#fff"></div>
<svg class="a" style="left:1099px;top:1344px" width="82" height="40" viewBox="0 0 82 40"><defs><linearGradient id="sg" x1="0" y1="0" x2="0" y2="1"><stop offset="0" stop-color="#0bb0ef"/><stop offset="0.550" stop-color="#1a78d8"/><stop offset="1" stop-color="#1c5cc0"/></linearGradient></defs><path d="M0 0h82L43 39H0z" fill="url(#sg)"/><text x="1" y="32" font-family="Liberation Sans, sans-serif" font-weight="bold" font-size="34" fill="#fff" stroke="#fff" stroke-width="1" textLength="58" lengthAdjust="spacingAndGlyphs">SAP</text></svg>

<svg class="a" style="left:1516px;top:1349px" width="19" height="27" viewBox="0 0 19 27"><path d="M1.500 1.500v23l15-11.500z" fill="#f4f8fc" stroke="#8fb0da" stroke-width="2"/><path d="M2 24.500l14-11" stroke="#9a9fb0" stroke-width="2"/></svg>

<div class="ssep" style="left:1545px"></div>
<div class="ssep" style="left:1769px"></div>
<div class="ssep" style="left:1978px"></div>
<div class="ssep" style="left:2045px"></div>
<div class="ssep" style="left:2098px"></div>
<div class="ssep" style="left:2178px"></div>
<div class="t" style="left:1558px;top:1347px"><span class="sx" style="transform:scaleX(0.9692)">/BNWVS/MAIN</span></div>
<svg class="a" style="left:1737px;top:1355px" width="19" height="11" viewBox="0 0 19 11"><path d="M0.500 1h18l-9 9.500z" fill="#27376b"/><path d="M0 0.500h19" stroke="#b9bfd0"/></svg>

<div class="t" style="left:1783px;top:1347px"><span class="sx" style="transform:scaleX(0.9616)">w16mss740M74</span></div>
<div class="t" style="left:1992px;top:1347px"><span class="sx" style="transform:scaleX(1.0134)">INS</span></div>
<svg class="a" style="left:2121px;top:1347px" width="36" height="30" viewBox="0 0 36 30"><path d="M1.500 0v16M34.500 13v16" stroke="#c6c6c6" stroke-width="1.600"/><path d="M6 7.500l8-5v4h20v2H14v4zM30 22.500l-8-5v4H4v2h18v4z" fill="#c4c4c4"/></svg>

<svg class="a" style="left:2191px;top:1347px" width="36" height="34" viewBox="0 0 36 34"><path d="M17 13V8c0-4 3-6 8-6s8 2 8 6v4" fill="none" stroke="#474747" stroke-width="3.600"/><rect x="2.500" y="16.500" width="23" height="15" fill="#8fb3d9" stroke="#0b5a99" stroke-width="3"/></svg>

<div class="a" style="left:53px;top:1391px;width:2188px;height:9px;background:linear-gradient(#d8e1f1,#7c9ad6 25%,#587ccb 50%,#4c6eb9);border-top-left-radius:30px 9px;border-top-right-radius:40px 9px"></div>
<svg class="a" style="left:0;top:0" width="2241" height="1400" viewBox="0 0 2241 1400"><defs><filter id="ash" x="-10%" y="-10%" width="130%" height="130%"><feGaussianBlur in="SourceAlpha" stdDeviation="2.5"/><feOffset dx="1.5" dy="4"/><feComponentTransfer><feFuncA type="linear" slope="0.6"/></feComponentTransfer><feMerge><feMergeNode/><feMergeNode in="SourceGraphic"/></feMerge></filter><filter id="nsh" x="-60%" y="-60%" width="220%" height="220%"><feGaussianBlur in="SourceAlpha" stdDeviation="2.2"/><feOffset dx="0.5" dy="3"/><feComponentTransfer><feFuncA type="linear" slope="0.6"/></feComponentTransfer><feMerge><feMergeNode/><feMergeNode in="SourceGraphic"/></feMerge></filter></defs><g filter="url(#ash)"><path d="M92.0 1141.0L124.0 1144.6L114.7 1118.2Z" fill="#d30f35"/><path d="M117.5 1132.1L398.0 1033.5" stroke="#d30f35" stroke-width="10.5" stroke-linecap="round" fill="none"/></g><g filter="url(#ash)"><path d="M1570.0 1156.0L1603.9 1155.6L1590.8 1129.3Z" fill="#d30f35"/><path d="M1595.5 1143.3L1826.7 1028.6" stroke="#d30f35" stroke-width="10.5" stroke-linecap="round" fill="none"/></g><g filter="url(#ash)"><path d="M490.0 165.0L502.1 196.3L522.3 174.1Z" fill="#d30f35"/><path d="M510.7 183.8L588.0 254.0" stroke="#d30f35" stroke-width="10.5" stroke-linecap="round" fill="none"/></g><clipPath id="c1"><path d="M465 1010H497V1035.700H483.400V1042H478.600V1035.700H465Z"/></clipPath><clipPath id="c1w"><path d="M460 1005H500V1031H487.400V1038.800A4.500 4.500 0 0 1 482.900 1043.300H478.900A4.500 4.500 0 0 1 474.400 1038.800V1031H460Z"/></clipPath><g filter="url(#nsh)"><text x="481" y="1038.8" font-family="Liberation Sans, sans-serif" font-size="29.700" text-anchor="middle" fill="#fff" stroke="#fff" stroke-width="9" stroke-linejoin="round" clip-path="url(#c1w)">1</text><text x="481" y="1038.8" font-family="Liberation Sans, sans-serif" font-size="29.700" text-anchor="middle" fill="#d30f35" stroke="#d30f35" stroke-width="0.25" clip-path="url(#c1)">1</text></g><g filter="url(#nsh)"><text x="1869" y="1013.6" font-family="Liberation Sans, sans-serif" font-size="29.700" text-anchor="middle" fill="#fff" stroke="#fff" stroke-width="9" stroke-linejoin="round">2</text><text x="1869" y="1013.6" font-family="Liberation Sans, sans-serif" font-size="29.700" text-anchor="middle" fill="#d30f35" stroke="#d30f35" stroke-width="0.25">2</text></g><g filter="url(#nsh)"><text x="646.5" y="265.7" font-family="Liberation Sans, sans-serif" font-size="29.700" text-anchor="middle" fill="#fff" stroke="#fff" stroke-width="9" stroke-linejoin="round">3</text><text x="646.5" y="265.7" font-family="Liberation Sans, sans-serif" font-size="29.700" text-anchor="middle" fill="#d30f35" stroke="#d30f35" stroke-width="0.25">3</text></g></svg>
<div class="a" style="left:0;top:0;width:5px;height:1400px;background:linear-gradient(90deg,#e6e8ec,rgba(240,242,246,0.6) 50%,rgba(255,255,255,0))"></div>
<div class="a" style="left:0;top:0;width:6px;height:6px;background:#c9d3e4"></div>
</body></html>
